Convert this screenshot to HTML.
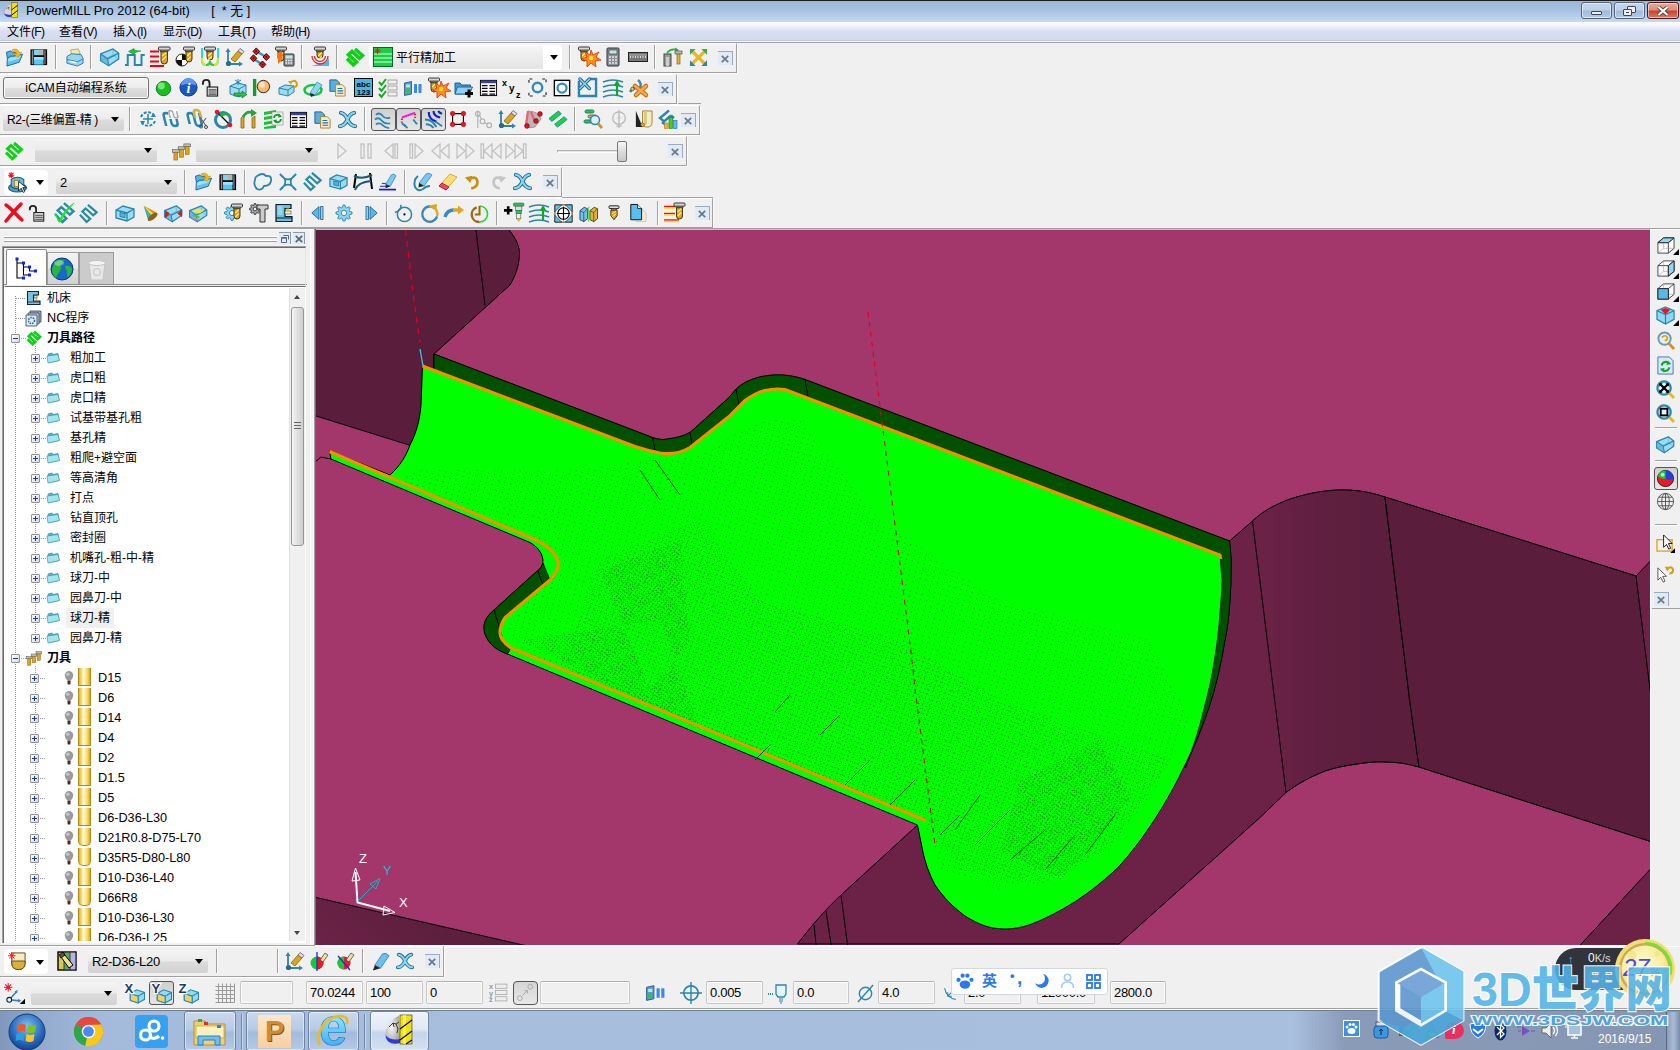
<!DOCTYPE html><html><head><meta charset="utf-8"><title>PowerMILL Pro 2012</title><style>
*{box-sizing:border-box;margin:0;padding:0}
html,body{width:1680px;height:1050px;overflow:hidden;background:#f0f0f0}
body{font-family:"Liberation Sans","Noto Sans CJK SC",sans-serif;font-size:12px;color:#000;position:relative}
#root{position:absolute;left:0;top:0;width:1680px;height:1050px;overflow:hidden;background:#f0f0f0}
.abs{position:absolute}
.title{position:absolute;left:0;top:0;width:1680px;height:22px;background:linear-gradient(#9ab7d9 0,#a6c1e1 40%,#b7cfea 75%,#c6daf1 100%);border-top:1px solid #1c1c1c}
.title .t{position:absolute;left:26px;top:2px;font-size:12.8px;line-height:16px;color:#000;white-space:pre}
.menubar{position:absolute;left:0;top:22px;width:1680px;height:19px;background:linear-gradient(#ffffff 0,#eef1fa 25%,#d9dff1 50%,#d3daee 100%);border-bottom:1px solid #c0c8dc}
.menubar span{position:absolute;top:3px;font-size:12px;line-height:15px;white-space:nowrap}
.menubar span i{font-style:normal;font-size:12px;letter-spacing:-0.7px}
.ln{position:absolute;left:0;width:1680px;height:1px}
.tb{position:absolute;height:30px;border-right:1px solid #a0a0a0;border-bottom:1px solid #a0a0a0;border-top:1px solid #fff;box-shadow:1px 1px 0 #fff}
.sep{position:absolute;width:2px;height:24px;border-left:1px solid #a0a0a0;border-right:1px solid #fff}
.ic{position:absolute;overflow:visible}
.cls{position:absolute;width:15px;height:14px;background:#e1ebf6;border-top:1px solid #9aaac0;border-right:1px solid #9aaac0}
.combo{position:absolute;height:23px;background:linear-gradient(#f4f4f4 0,#ebebeb 48%,#dcdcdc 52%,#d2d2d2 100%);border-radius:2px;font-size:13px;line-height:24px;padding-left:4px;white-space:nowrap;letter-spacing:-0.3px}
.combo:after{content:"";position:absolute;right:5px;top:9px;border:4px solid transparent;border-top:5px solid #000;border-bottom:0}
.fld{position:absolute;height:23px;background:#f0f0f0;border:1px solid #c8c8c8;border-top-color:#aeb2b8;border-radius:2px;font-size:13px;letter-spacing:-0.3px;line-height:22px;padding-left:3px;box-shadow:inset 0 0 0 1px #fafafa}

.wb{position:absolute;top:1px;height:17px;border:1px solid #54637c;border-radius:3px;box-shadow:inset 0 0 0 1px rgba(255,255,255,.55)}
.wb.n{background:linear-gradient(#c3d6ec 0,#bcd0e8 48%,#9fbad8 52%,#b3cbe6 100%)}
.wb.c{background:linear-gradient(#e9a99a 0,#dd8b78 48%,#c4452c 52%,#d77a5e 100%);border-color:#4e1420}
.lp{position:absolute;left:0;top:230px;width:310px;height:714px;background:#f0f0f0}
.tree{position:absolute;left:4px;top:286px;width:302px;height:656px;background:#fff;border:1px solid #fff;border-top-color:#696969;overflow:hidden}
  .tr{position:absolute;height:20px;line-height:21px;font-size:12px;white-space:nowrap}
.tr b{font-weight:bold}
.pm{position:absolute;width:9px;height:9px;border:1px solid #919191;background:linear-gradient(135deg,#fff,#d8d8d8);border-radius:1px}
.pm:before{content:"";position:absolute;left:1px;top:3px;width:5px;height:1px;background:#1a3a8a}
.pm.p:after{content:"";position:absolute;left:3px;top:1px;width:1px;height:5px;background:#1a3a8a}
.dotv{position:absolute;width:1px;background-image:linear-gradient(#999 50%,transparent 50%);background-size:1px 2px}
.doth{position:absolute;height:1px;background-image:linear-gradient(90deg,#999 50%,transparent 50%);background-size:2px 1px}
.tbar{position:absolute;left:0;top:1010px;width:1680px;height:40px;background:linear-gradient(90deg,#8098bc 0,#93abcc 2.5%,#a3badb 6%,#a7bedd 30%,#a8bfdd 77%,#8a9bb8 80%,#8596b2 100%);border-top:1px solid #6d7f98}
.tk{position:absolute;top:0px;height:40px;border:1px solid #6f83a3;border-radius:3px;background:linear-gradient(#c9d9ee 0,#b7cbe6 45%,#a3bbdb 55%,#b4c9e4 100%);box-shadow:inset 0 0 0 1px rgba(255,255,255,.5)}
</style></head><body><div id="root">
<div class="title"><svg class="ic" style="left:3px;top:1px" width="16" height="16" viewBox="0 0 20 20" ><path d="M10,2 C4,4 0.500,11 1.500,15 C3,19 7,19 11,18Z" fill="#d4d6dc" stroke="#889" stroke-width="0.500"/><path d="M1.300,13.500 C2,18.500 7,19.500 11,18 L11,15.500 C7,16.500 3,16 1.300,13.500Z" fill="#3038e0"/><path d="M4,9 l2.500,-2.500 2,1 M6.500,6.500 l1,3" stroke="#333" stroke-width="0.700" fill="none"/><rect x="10.500" y="1" width="8" height="18" fill="#f0e010" stroke="#3a3000" stroke-width="0.500"/><path d="M10.500,10 L18.500,4 M10.500,16.500 L18.500,10.500" stroke="#111" stroke-width="1.200"/></svg><span class="t">PowerMILL Pro 2012 (64-bit)      [  * 无 ]</span><div class="wb n" style="left:1581px;width:31px"><div style="position:absolute;left:9px;top:8px;width:11px;height:4px;background:#eee;border:1px solid #445;border-radius:1px"></div></div><div class="wb n" style="left:1614px;width:31px"><div style="position:absolute;left:12px;top:3px;width:9px;height:7px;background:#eee;border:1px solid #445;border-radius:1px"></div><div style="position:absolute;left:8px;top:6px;width:9px;height:7px;background:#eee;border:2px solid #445;border-width:1px;border-radius:1px;box-shadow:inset 0 0 0 2px #eee, inset 0 0 0 3px #445"></div></div><div class="wb c" style="left:1647px;width:32px"><svg style="position:absolute;left:9px;top:3px" width="12" height="10" viewBox="0 0 12 10"><path d="M1.500,1 L10.500,9 M10.500,1 L1.500,9" stroke="#444" stroke-width="3.800"/><path d="M1.500,1 L10.500,9 M10.500,1 L1.500,9" stroke="#fff" stroke-width="2.200"/></svg></div></div>
<div class="menubar">
<span style="left:7px">文件<i>(F)</i></span>
<span style="left:59px">查看<i>(V)</i></span>
<span style="left:113px">插入<i>(I)</i></span>
<span style="left:163px">显示<i>(D)</i></span>
<span style="left:218px">工具<i>(T)</i></span>
<span style="left:271px">帮助<i>(H)</i></span>
</div>
<div class="ln" style="top:41px;background:#fafafa"></div><div class="ln" style="top:42px;background:#a0a0a0"></div>
<div class="tb" style="left:0;top:43px;width:737px;height:30px"></div><div class="tb" style="left:0;top:74px;width:677px;height:30px"></div><div class="tb" style="left:0;top:105px;width:700px;height:30px"></div><div class="tb" style="left:0;top:136px;width:687px;height:30px"></div><div class="tb" style="left:0;top:167px;width:562px;height:30px"></div><div class="tb" style="left:0;top:198px;width:713px;height:30px"></div><div class="abs" style="left:562px;top:197px;width:151px;height:1px;background:#a0a0a0"></div><div class="abs" style="left:678px;top:103px;width:23px;height:1px;background:#a0a0a0"></div><svg class="ic" style="left:5px;top:48px" width="19" height="19" viewBox="0 0 20 20" ><path d="M1.500,4.500 L6,3 L8,5 L12.500,4.500 L12.500,9 L2.500,11Z" fill="#58b4e0" stroke="#1a5a8a" stroke-width="0.900"/><path d="M2.500,11 Q5,7.500 9,8.500 L18.500,6.500 L15,15 L2,19 Z" fill="#5cc4f0" stroke="#1a5a8a" stroke-width="0.900"/><path d="M3.500,11.500 Q5.500,9 9,9.800 L16.500,8.200 L15.300,11 L3,14.500Z" fill="#b0e8fc" opacity="0.800"/><path d="M7.500,1.800 Q13.500,-0.500 15,4.800 L17.500,4.200 L14,10 L9.500,6.800 L12.300,6 Q11.500,3 8,3.800Z" fill="#f2b818" stroke="#b88408" stroke-width="0.500"/></svg><svg class="ic" style="left:30px;top:48px" width="18" height="18" viewBox="0 0 20 20" ><rect x="0.500" y="1.500" width="18.500" height="17.500" fill="#050505"/><rect x="2" y="2.500" width="1.800" height="15.500" fill="#8a8a8a"/><rect x="15.700" y="2.500" width="1.800" height="15.500" fill="#6a6a6a"/><rect x="4.500" y="2" width="10.500" height="6" fill="#7cd4f0"/><rect x="9.500" y="2" width="5" height="5.500" fill="#b4b4b4"/><rect x="4.500" y="10" width="10.500" height="8.500" fill="#58c8f0"/><rect x="4.500" y="10" width="10.500" height="3" fill="#a0e0f8"/></svg><svg class="ic" style="left:65px;top:48px" width="19" height="19" viewBox="0 0 20 20" ><path d="M6,2 l8,-1 2,5 -9,2z" fill="#f4e8b0" stroke="#b09838" stroke-width="0.8"/><path d="M2,9 l5,-3 10,1 2,4 v5 l-6,3 -11,-3z" fill="#9ad4f0" stroke="#2a80b0"/><path d="M2,12 l11,2.500 6,-3" stroke="#2a80b0" fill="none"/><path d="M5,14 l7,1.500" stroke="#fff" stroke-width="1.500"/></svg><svg class="ic" style="left:100px;top:47px" width="20" height="20" viewBox="0 0 20 20" ><path d="M0.6,6.900 L13,1.900 L18.700,6.200 L18.700,11.900 L8.700,18.700 L0.600,13.700Z" fill="#9adcf2" stroke="#2a86ad" stroke-width="1.300" stroke-linejoin="round"/><path d="M0.600,6.900 L7.500,11.900 L18.700,6.200 M7.500,11.900 L8.700,18.700" fill="none" stroke="#2a86ad" stroke-width="1.300"/><path d="M0.600,6.900 L7.500,11.900 L8.700,18.700 L0.600,13.700Z" fill="#4aa8d0" opacity="0.550"/><path d="M13,1.900 V8 L0.600,13.700 M13,8 L18.700,11.900" fill="none" stroke="#2a86ad" stroke-width="0.500" opacity="0.700"/></svg><svg class="ic" style="left:125px;top:47px" width="20" height="20" viewBox="0 0 20 20" ><path d="M0,18 H2.75 V8 H9.75 V18 H16.5 V8 H19.75" fill="none" stroke="#2a86ad" stroke-width="2"/><path d="M3.5,4.4 L9,1.5 Q8,3.5 16,4 Q9,5 9,7.5Z" fill="#20c030" stroke="#0a8018" stroke-width="0.5"/></svg><svg class="ic" style="left:150px;top:47px" width="20" height="20" viewBox="0 0 20 20" ><path d="M0,4.5 h9 M0,9.5 h9 M0,14.5 h9 M0,19 h14" stroke="#f00010" stroke-width="1.8"/><rect x="8.5" y="0" width="11.5" height="3.2" rx="0.8" fill="#d8d8d8" stroke="#222" stroke-width="0.9"/><rect x="10.5" y="3.2" width="7.5" height="1.6" fill="#aaa" stroke="#333" stroke-width="0.6"/><path d="M11,4.8 V13.75 a3.25,3.25 0 0 0 6.5,0 V4.8Z" fill="#d9a521" stroke="#3a2a00" stroke-width="0.9"/><path d="M12.2,9 l4.1,-3.5 M12.2,13 l4.1,-3.5" stroke="#ffe890" stroke-width="1.1"/></svg><svg class="ic" style="left:175px;top:47px" width="20" height="20" viewBox="0 0 20 20" ><circle cx="7" cy="13" r="6" fill="#fff" stroke="#222"/><path d="M7,7 a6,6 0 0 1 6,6 h-6z M7,19 a6,6 0 0 1 -6,-6 h6z" fill="#111"/><rect x="8.5" y="0" width="11" height="3.2" rx="0.8" fill="#d8d8d8" stroke="#222" stroke-width="0.9"/><rect x="10.5" y="3.2" width="7" height="1.6" fill="#aaa" stroke="#333" stroke-width="0.6"/><path d="M11,4.8 V12.0 a3.0,3.0 0 0 0 6,0 V4.8Z" fill="#d9a521" stroke="#3a2a00" stroke-width="0.9"/><path d="M12.2,9 l3.6,-3.5 M12.2,13 l3.6,-3.5" stroke="#ffe890" stroke-width="1.1"/></svg><svg class="ic" style="left:200px;top:47px" width="20" height="20" viewBox="0 0 20 20" ><path d="M2,1 V13 q0,5 4,5 q4,0 4,-4 q0,4 4,4 q4,0 4,-5 V1" fill="none" stroke="#20d8f0" stroke-width="2"/><path d="M2,11 q0,7 4,7 q4,0 4,-4 q0,4 4,4 q4,0 4,-7" fill="none" stroke="#e8e020" stroke-width="2"/><path d="M6,18 q4,0 4,-4 q0,4 4,4" fill="none" stroke="#20d040" stroke-width="2"/><rect x="4.5" y="0" width="11" height="3.2" rx="0.8" fill="#d8d8d8" stroke="#222" stroke-width="0.9"/><rect x="6.5" y="3.2" width="7" height="1.6" fill="#aaa" stroke="#333" stroke-width="0.6"/><path d="M7,4.8 V10.0 a3.0,3.0 0 0 0 6,0 V4.8Z" fill="#d9a521" stroke="#3a2a00" stroke-width="0.9"/><path d="M8.2,9 l3.6,-3.5 M8.2,13 l3.6,-3.5" stroke="#ffe890" stroke-width="1.1"/></svg><svg class="ic" style="left:225px;top:47px" width="20" height="20" viewBox="0 0 20 20" ><path d="M3,17 V3 M3,17 H16" stroke="#2a86ad" stroke-width="1.8" fill="none"/><path d="M0.5,5 L3,1 L5.5,5Z M14,14.5 L18,17 L14,19.5Z" fill="#2a86ad"/><circle cx="3.5" cy="16.5" r="2.6" fill="#2a6a8a"/><path d="M6,12 L13,4 L17,7 L10,15Z" fill="#d9a521" stroke="#8a6412" stroke-width="0.8"/><path d="M13,4 L15,1.5 L19,4.5 L17,7Z" fill="#ddd" stroke="#555" stroke-width="0.7"/></svg><svg class="ic" style="left:250px;top:47px" width="20" height="20" viewBox="0 0 20 20" ><path d="M6.300,4.400 L16.300,10 M2.500,11.300 L12.500,17.500" stroke="#3a9ab8" stroke-width="2.400"/><g fill="#e81020" stroke="#200" stroke-width="0.900"><path d="M6.300,0.900 l3.300,3.500 -3.300,3.500 -3.300,-3.500z M16.300,6.500 l3.300,3.500 -3.300,3.500 -3.300,-3.500z M3.500,7.800 l3.300,3.500 -3.300,3.500 -3.300,-3.500z M12.500,14 l3.300,3.500 -3.300,3.500 -3.300,-3.500z"/></g><g fill="#300"><circle cx="6.300" cy="4.400" r="0.800"/><circle cx="16.300" cy="10" r="0.800"/><circle cx="3.500" cy="11.300" r="0.800"/><circle cx="12.500" cy="17.500" r="0.800"/></g></svg><svg class="ic" style="left:275px;top:47px" width="20" height="20" viewBox="0 0 20 20" ><rect x="0.5" y="0" width="11" height="3.2" rx="0.8" fill="#d8d8d8" stroke="#222" stroke-width="0.9"/><rect x="2.5" y="3.2" width="7" height="1.6" fill="#aaa" stroke="#333" stroke-width="0.6"/><path d="M3,4.8 V11.0 a3.0,3.0 0 0 0 6,0 V4.8Z" fill="#d9a521" stroke="#3a2a00" stroke-width="0.9"/><path d="M4.2,9 l3.6,-3.5 M4.2,13 l3.6,-3.5" stroke="#ffe890" stroke-width="1.1"/><path d="M3,6 l3,-2 2,4 -2,6 -3,3z" fill="#ff7010"/><rect x="9" y="7" width="10" height="12" rx="1" fill="#8a9098" stroke="#333"/><rect x="10.500" y="8.500" width="7" height="3" fill="#bfe8e0"/><path d="M10.500,13.500 h7 M10.500,16 h7" stroke="#eee" stroke-width="1.400" stroke-dasharray="1.500,1"/></svg><svg class="ic" style="left:310px;top:47px" width="20" height="20" viewBox="0 0 20 20" ><path d="M1,19 h18 v-8 q-4,6 -10,6z" fill="#50b8e8"/><path d="M2,9 a8,8 0 0 0 16,0 M4.500,9 a5.500,5.500 0 0 0 11,0" fill="none" stroke="#f02030" stroke-width="1.300"/><rect x="4.5" y="0" width="11" height="3.2" rx="0.8" fill="#d8d8d8" stroke="#222" stroke-width="0.9"/><rect x="6.5" y="3.2" width="7" height="1.6" fill="#aaa" stroke="#333" stroke-width="0.6"/><path d="M7,4.8 V8.0 a3.0,3.0 0 0 0 6,0 V4.8Z" fill="#d9a521" stroke="#3a2a00" stroke-width="0.9"/><path d="M8.2,9 l3.6,-3.5 M8.2,13 l3.6,-3.5" stroke="#ffe890" stroke-width="1.1"/></svg><svg class="ic" style="left:345px;top:47px" width="20" height="20" viewBox="0 0 20 20" ><path d="M10,2 L17.500,8.500 L14.500,11.300 L7,4.500 L3.500,7.800 L11.500,15 L8.300,17.800 L2,11.500" fill="none" stroke="#10d018" stroke-width="3.600" stroke-linejoin="miter"/></svg><div class="sep" style="left:55px;top:45px"></div><div class="sep" style="left:90px;top:45px"></div><div class="sep" style="left:301px;top:45px"></div><div class="sep" style="left:336px;top:45px"></div><div class="sep" style="left:569px;top:45px"></div><div class="sep" style="left:654px;top:45px"></div><div class="abs" style="left:369px;top:45px;width:193px;height:25px;background:#fff;border-radius:4px"></div><div class="abs" style="left:372px;top:46px;width:171px;height:23px;background:linear-gradient(#f6f6f6,#ececec 50%,#e4e4e4)"></div><svg class="ic" style="left:373px;top:47px" width="20" height="20" viewBox="0 0 20 20" ><rect x="0.500" y="0.500" width="19" height="19" fill="#18d040" stroke="#063"/><path d="M1,7 h18 M1,11 h18 M1,15 h18" stroke="#9ff0b0" stroke-width="1.600"/><path d="M1.500,4 h6 M4.500,1 v6 M2.300,1.800 l4.400,4.400 M6.700,1.800 l-4.400,4.400" stroke="#f01020" stroke-width="1"/></svg><div class="abs" style="left:396px;top:50px;font-size:12px;line-height:16px;white-space:nowrap">平行精加工</div><div class="abs" style="left:550px;top:55px;border:4px solid transparent;border-top:5px solid #000;border-bottom:0"></div><svg class="ic" style="left:578px;top:47px" width="20" height="20" viewBox="0 0 20 20" ><rect x="0.5" y="0" width="11" height="3.2" rx="0.8" fill="#d8d8d8" stroke="#222" stroke-width="0.9"/><rect x="2.5" y="3.2" width="7" height="1.6" fill="#aaa" stroke="#333" stroke-width="0.6"/><path d="M3,4.8 V11.0 a3.0,3.0 0 0 0 6,0 V4.8Z" fill="#d9a521" stroke="#3a2a00" stroke-width="0.9"/><path d="M4.2,9 l3.6,-3.5 M4.2,13 l3.6,-3.5" stroke="#ffe890" stroke-width="1.1"/><path d="M13,3 l2,5 6,-3 -3,5 5,3 -6,1 1,6 -5,-4 -4,4 0,-6 -5,-2 5,-2 -2,-5 5,3z" fill="#ff8c10" stroke="#e03010" stroke-width="0.8"/><circle cx="13" cy="11" r="2.2" fill="#ffe040"/></svg><svg class="ic" style="left:603px;top:47px" width="20" height="20" viewBox="0 0 20 20" ><rect x="4" y="1" width="12" height="18" rx="1" fill="#8a9098" stroke="#333"/><rect x="6" y="3" width="8" height="4" fill="#bfe8e0" stroke="#333" stroke-width="0.6"/><path d="M6,10 h8 M6,13 h8 M6,16 h8" stroke="#e8e8e8" stroke-width="1.6" stroke-dasharray="2,1"/></svg><svg class="ic" style="left:628px;top:47px" width="20" height="20" viewBox="0 0 20 20" ><rect x="0.500" y="5.500" width="19" height="9" fill="#777" stroke="#222"/><path d="M2,10 h16" stroke="#ddd" stroke-width="2" stroke-dasharray="1,1.500"/><path d="M1,8 h18" stroke="#aaa" stroke-width="1"/></svg><svg class="ic" style="left:663px;top:47px" width="20" height="20" viewBox="0 0 20 20" ><rect x="1" y="7" width="7" height="12" fill="#999" stroke="#444"/><rect x="3" y="10" width="3" height="9" fill="#ccc"/><path d="M4,6 q4,-5 10,-3" stroke="#20b040" stroke-width="1.800" fill="none"/><path d="M12,0.500 l4,2.500 -4,2.500z" fill="#20b040"/><rect x="12" y="4" width="7" height="3" fill="#bbb" stroke="#555" stroke-width="0.700"/><rect x="14" y="7" width="3" height="10" fill="#e0b030" stroke="#8a6412" stroke-width="0.700"/></svg><svg class="ic" style="left:689px;top:48px" width="19" height="19" viewBox="0 0 20 20" ><path d="M3,3 L17,17 M17,3 L3,17" stroke="#e8b820" stroke-width="3.500"/><path d="M1,1 h6 l-6,6z M19,1 v6 l-6,-6z" fill="#30b050"/><path d="M1,19 v-6 l6,6z M19,19 h-6 l6,-6z" fill="#2a86ad"/></svg><div class="cls" style="left:718px;top:51px"><svg style="position:absolute;left:3px;top:3px" width="8" height="8" viewBox="0 0 8 8"><path d="M0.800,0.800 L7.200,7.200 M7.200,0.800 L0.800,7.200" stroke="#687888" stroke-width="1.700"/></svg></div><div class="abs" style="left:3px;top:77px;width:146px;height:22px;border:1px solid #707070;border-radius:3px;background:linear-gradient(#f4f4f4 0,#ececec 48%,#dedede 52%,#d2d2d2 100%);box-shadow:inset 0 0 0 1px #fcfcfc;text-align:center;font-size:12px;line-height:21px;white-space:nowrap">iCAM自动编程系统</div><svg class="ic" style="left:155px;top:80px" width="17" height="17" viewBox="0 0 20 20" ><circle cx="10" cy="10" r="8.500" fill="#18c018" stroke="#064"/><circle cx="7.500" cy="7" r="4" fill="#8ff08f" opacity="0.800"/></svg><svg class="ic" style="left:179px;top:78px" width="19" height="19" viewBox="0 0 20 20" ><circle cx="10" cy="10" r="9" fill="#1858c0" stroke="#0a3080"/><path d="M2,8 a8,8 0 0 1 16,0 q-8,-4 -16,0z" fill="#5c98ec"/><text x="10" y="16" font-family="Liberation Serif,serif" font-style="italic" font-weight="bold" font-size="15" fill="#fff" text-anchor="middle">i</text></svg><svg class="ic" style="left:201px;top:78px" width="19" height="19" viewBox="0 0 20 20" ><path d="M9,10 V5.500 q0,-3.500 -3.500,-3.500 q-3.500,0 -3.500,3.500 v1.500" fill="none" stroke="#222" stroke-width="2"/><rect x="6.500" y="9.500" width="11" height="9.500" fill="#e4e4e4" stroke="#222" stroke-width="1.200"/><path d="M8,12.500 h8.500 M8,14.700 h8.500 M8,16.900 h8.500" stroke="#444" stroke-width="1.200"/></svg><svg class="ic" style="left:228px;top:78px" width="20" height="20" viewBox="0 0 20 20" ><path d="M2,8 l7,-3 9,2 v8 l-7,4 -9,-3z" fill="#9adcf2" stroke="#2a86ad"/><path d="M2,8 l9,3 7,-4 M11,11 v8" stroke="#2a86ad" fill="none"/><path d="M6,15 h8 v-2 l5,3.500 -5,3.500 v-2 h-8z" fill="#30c040" stroke="#087018" stroke-width="0.600"/><path d="M10,1 v6 M7,2 l6,4 M13,2 l-6,4" stroke="#2a86ad" stroke-width="1"/></svg><svg class="ic" style="left:252px;top:78px" width="19" height="19" viewBox="0 0 20 20" ><rect x="1" y="1" width="3.500" height="18" fill="#10a020"/><circle cx="12" cy="9" r="6.500" fill="#ffb870" stroke="#222"/><circle cx="10.500" cy="7" r="3" fill="#ffe0c0"/></svg><svg class="ic" style="left:278px;top:78px" width="20" height="20" viewBox="0 0 20 20" ><path d="M1,10 l6,-3 9,1 v6 l-6,4 -9,-2z" fill="#9adcf2" stroke="#2a86ad"/><path d="M1,10 l9,2 6,-4 M10,12 v6" stroke="#2a86ad" fill="none"/><path d="M12,5 q5,-5 7,1 q0,3 -3,3" fill="none" stroke="#d8a010" stroke-width="2"/><path d="M10,3 l4,0 -1,4z" fill="#d8a010"/></svg><svg class="ic" style="left:303px;top:78px" width="20" height="20" viewBox="0 0 20 20" ><ellipse cx="10" cy="12" rx="8.500" ry="5" fill="none" stroke="#10c840" stroke-width="2.500"/><path d="M7,15 L14,4 L19,7 L12,17Z" fill="#8fd4f4" stroke="#3a90c0" stroke-width="0.800"/><path d="M7,15 l1,4 4,-2z" fill="#222"/></svg><svg class="ic" style="left:328px;top:78px" width="19" height="19" viewBox="0 0 20 20" ><path d="M2,2 h7 l3,3 v9 h-10z" fill="#58b0e0" stroke="#1c5e94"/><path d="M8,7 h7 l3,3 v9 h-10z" fill="#f4ecd0" stroke="#b08820"/><path d="M10,11 h5 M10,13.5 h6 M10,16 h6" stroke="#2a70b0" stroke-width="1.2"/></svg><svg class="ic" style="left:354px;top:78px" width="19" height="19" viewBox="0 0 20 20" ><rect x="0.500" y="0.500" width="19" height="19" fill="#4ab4e4" stroke="#000"/><text x="10" y="9" font-family="Liberation Sans,sans-serif" font-weight="bold" font-size="8.500" text-anchor="middle" fill="#000">abc</text><text x="10" y="17.500" font-family="Liberation Sans,sans-serif" font-weight="bold" font-size="8.500" text-anchor="middle" fill="#000">123</text></svg><svg class="ic" style="left:378px;top:78px" width="20" height="20" viewBox="0 0 20 20" ><path d="M1,4 l2.500,3 4.500,-6 M1,10 l2.500,3 4.500,-6 M1,16 l2.500,3 4.500,-6" fill="none" stroke="#18a828" stroke-width="2"/><g fill="#eee" stroke="#888" stroke-width="0.700"><rect x="10" y="2" width="9" height="4"/><rect x="10" y="8" width="9" height="4"/><rect x="10" y="14" width="9" height="4"/></g></svg><svg class="ic" style="left:403px;top:78px" width="20" height="20" viewBox="0 0 20 20" ><path d="M1.500,5 l7,-1.500 v12.500 l-7,1.500z" fill="#5a98d0" stroke="#2a4a90" stroke-width="0.800"/><rect x="3" y="6.500" width="4" height="3" fill="#b0f0c0"/><rect x="3" y="10.500" width="4" height="5" fill="#30c060"/><rect x="11" y="6" width="3" height="9" rx="0.500" fill="#3a88e8"/><rect x="15.500" y="6" width="3" height="9" rx="0.500" fill="#3a88e8"/></svg><svg class="ic" style="left:428px;top:78px" width="20" height="20" viewBox="0 0 20 20" ><rect x="0.5" y="0" width="11" height="3.2" rx="0.8" fill="#d8d8d8" stroke="#222" stroke-width="0.9"/><rect x="2.5" y="3.2" width="7" height="1.6" fill="#aaa" stroke="#333" stroke-width="0.6"/><path d="M3,4.8 V11.0 a3.0,3.0 0 0 0 6,0 V4.8Z" fill="#d9a521" stroke="#3a2a00" stroke-width="0.9"/><path d="M4.2,9 l3.6,-3.5 M4.2,13 l3.6,-3.5" stroke="#ffe890" stroke-width="1.1"/><path d="M13,3 l2,5 6,-3 -3,5 5,3 -6,1 1,6 -5,-4 -4,4 0,-6 -5,-2 5,-2 -2,-5 5,3z" fill="#ff8c10" stroke="#e03010" stroke-width="0.8"/><circle cx="13" cy="11" r="2.2" fill="#ffe040"/></svg><svg class="ic" style="left:454px;top:78px" width="20" height="20" viewBox="0 0 20 20" ><path d="M1,5 h5 l1.500,2 h9 v9 h-15.500z" fill="#3f9bd4" stroke="#1c5e94"/><path d="M3.500,9 h15 l-3,7 h-14.500z" fill="#8ed0f5" stroke="#1c6ea4"/><path d="M11,15.500 h8 M15,11.500 v8" stroke="#000" stroke-width="3"/></svg><svg class="ic" style="left:479px;top:78px" width="19" height="19" viewBox="0 0 20 20" ><rect x="1.5" y="2.5" width="17" height="16" fill="#fff" stroke="#000"/><rect x="2" y="3" width="16" height="2.5" fill="#3040c0"/><path d="M3,8 h6 M11,8 h6 M3,11 h6 M11,11 h6 M3,14 h6 M11,14 h6 M3,17 h6 M11,17 h6" stroke="#000" stroke-width="1.3"/></svg><svg class="ic" style="left:502px;top:78px" width="20" height="20" viewBox="0 0 20 20" ><g font-family="Liberation Sans,sans-serif" font-weight="bold" fill="#000"><text x="0" y="8" font-size="9">x</text><text x="7" y="14" font-size="10">y</text><text x="14" y="20" font-size="9">z</text></g></svg><svg class="ic" style="left:528px;top:78px" width="19" height="19" viewBox="0 0 20 20" ><circle cx="10" cy="10" r="5" fill="none" stroke="#3a8ab8" stroke-width="2.500"/><path d="M1,5 V1 H5 M15,1 H19 V5 M19,15 V19 H15 M5,19 H1 V15" fill="none" stroke="#222" stroke-width="1.200" stroke-dasharray="3,1.500"/></svg><svg class="ic" style="left:553px;top:79px" width="18" height="18" viewBox="0 0 20 20" ><rect x="1.500" y="1.500" width="17" height="17" fill="#fff" stroke="#000" stroke-width="1.500"/><circle cx="10" cy="10" r="5" fill="none" stroke="#3a8ab8" stroke-width="2.500"/></svg><svg class="ic" style="left:578px;top:78px" width="19" height="19" viewBox="0 0 20 20" ><path d="M1,3 V19 H19 V1 H12" fill="none" stroke="#2a86ad" stroke-width="2.500"/><path d="M2,1 L12,11 M12,1 L2,11" stroke="#1d6e92" stroke-width="3.500" stroke-linecap="round"/><path d="M2,1 L12,11 M12,1 L2,11" stroke="#8fd4ee" stroke-width="1.500" stroke-linecap="round"/></svg><svg class="ic" style="left:603px;top:78px" width="20" height="20" viewBox="0 0 20 20" ><path d="M0,4 q10,-4 20,0 M0,9 q10,-4 20,0 M0,14 q10,-4 20,0 M0,19 q10,-4 20,0" fill="none" stroke="#2a86ad" stroke-width="1.600"/><path d="M14,17 V6" stroke="#10a828" stroke-width="2.200"/><path d="M10.500,8 L14,2 L17.500,8Z" fill="#10a828"/></svg><svg class="ic" style="left:628px;top:78px" width="20" height="20" viewBox="0 0 20 20" ><path d="M10,2 q5,4 1,9 M2,14 q4,-6 8,-3" fill="none" stroke="#3a8ab8" stroke-width="2.500"/><path d="M7,8 L18,17 M18,8 L8,17" stroke="#c07010" stroke-width="4.500" stroke-linecap="round"/><path d="M7,8 L18,17 M18,8 L8,17" stroke="#f8a848" stroke-width="2.500" stroke-linecap="round"/><circle cx="4.500" cy="11" r="1.800" fill="#f0d020" stroke="#222" stroke-width="0.600"/></svg><div class="cls" style="left:658px;top:82px"><svg style="position:absolute;left:3px;top:3px" width="8" height="8" viewBox="0 0 8 8"><path d="M0.800,0.800 L7.200,7.200 M7.200,0.800 L0.800,7.200" stroke="#687888" stroke-width="1.700"/></svg></div><div class="combo" style="left:3px;top:108px;width:121px;height:23px;font-size:12px">R2-(三维偏置-精 )</div><div class="sep" style="left:129px;top:107px"></div><svg class="ic" style="left:138px;top:109px" width="20" height="20" viewBox="0 0 20 20" ><path d="M3,8 a7.500,7.500 0 0 1 14,0 M17,12 a7.500,7.500 0 0 1 -14,0" fill="none" stroke="#2a86ad" stroke-width="2" stroke-dasharray="3,1.500"/><path d="M10,5 v10 M5,10 h10" stroke="#2a86ad" stroke-width="1.500"/><path d="M15,4 l3,4 -5,0z M5,16 l-3,-4 5,0z" fill="#2a86ad"/></svg><svg class="ic" style="left:163px;top:109px" width="20" height="20" viewBox="0 0 20 20" ><g transform="translate(-3 0) skewX(14)"><path d="M2,17 V7 q0,-3 3,-3 q3,0 3,3 v7 q0,3 3,3 q3,0 3,-3 V4" fill="none" stroke="#2a86ad" stroke-width="2.500"/></g><rect x="5" y="0" width="10" height="10" fill="#fff" opacity="0.900"/><g transform="translate(-1 0) skewX(14)"><path d="M6,9 V4 q0,-2.500 2,-2.500 q2,0 2,2.500 v3 q0,2 2,2 q2,0 2,-2 V2" fill="none" stroke="#a8a8a8" stroke-width="1.500"/></g></svg><svg class="ic" style="left:188px;top:109px" width="20" height="20" viewBox="0 0 20 20" ><g transform="translate(-3 0) skewX(14)"><path d="M1,15 V7 q0,-3 3,-3 q3,0 3,3 v7 q0,3 3,3 q3,0 3,-3 V4" fill="none" stroke="#2a86ad" stroke-width="2.500"/><path d="M8,9 V4 q0,-3 3,-3 q3,0 3,3 v5" fill="none" stroke="#d0b040" stroke-width="2.500"/></g><path d="M12,8 L18,17 M18,9 L13,16" stroke="#667" stroke-width="1.200"/><circle cx="13" cy="17.500" r="1.500" fill="none" stroke="#445" stroke-width="1"/><circle cx="18" cy="18" r="1.500" fill="none" stroke="#445" stroke-width="1"/></svg><svg class="ic" style="left:213px;top:109px" width="20" height="20" viewBox="0 0 20 20" ><circle cx="10" cy="11" r="7.500" fill="none" stroke="#2a86ad" stroke-width="3"/><path d="M4,3 L17,16" stroke="#000" stroke-width="1.200"/><path d="M8,7 q5,-4 9,0" fill="none" stroke="#20b040" stroke-width="2.500"/><path d="M6,5 l5,-2 -1,5z" fill="#20b040"/><circle cx="4" cy="3" r="2.300" fill="#f01020"/><circle cx="17" cy="16" r="2.300" fill="#f01020"/></svg><svg class="ic" style="left:238px;top:109px" width="20" height="20" viewBox="0 0 20 20" ><path d="M3,19 V9 l3,-3 v13z M14,19 V9 l3,-2 v12z" fill="#d9a521" stroke="#8a6412" stroke-width="0.800"/><path d="M5,8 q4,-7 10,-4" fill="none" stroke="#20a838" stroke-width="2.800"/><path d="M13,0 l6,4 -6,4z" fill="#20a838"/></svg><svg class="ic" style="left:263px;top:109px" width="20" height="20" viewBox="0 0 20 20" ><path d="M1,3 l12,-2 v3 l-12,2z M1,8 l12,-2 v3 l-12,2z M1,13 l12,-2 v3 l-12,2z M1,18 l12,-2 v3 l-12,1z" fill="#18c038"/><rect x="9" y="3" width="11" height="13" fill="#f4f4f4" stroke="#888" stroke-width="0.600"/><path d="M11,9 a3.500,3.500 0 0 1 6.500,-1.500 M18,10 a3.500,3.500 0 0 1 -6.500,1.500" fill="none" stroke="#10a028" stroke-width="1.800"/><path d="M16,5 l3,3 -4,0.500z M13,14 l-3,-3 4,-0.500z" fill="#10a028"/></svg><svg class="ic" style="left:289px;top:110px" width="19" height="19" viewBox="0 0 20 20" ><rect x="1.5" y="2.5" width="17" height="16" fill="#fff" stroke="#000"/><rect x="2" y="3" width="16" height="2.5" fill="#3040c0"/><path d="M3,8 h6 M11,8 h6 M3,11 h6 M11,11 h6 M3,14 h6 M11,14 h6 M3,17 h6 M11,17 h6" stroke="#000" stroke-width="1.3"/></svg><svg class="ic" style="left:313px;top:110px" width="19" height="19" viewBox="0 0 20 20" ><path d="M2,2 h7 l3,3 v9 h-10z" fill="#58b0e0" stroke="#1c5e94"/><path d="M8,7 h7 l3,3 v9 h-10z" fill="#f4ecd0" stroke="#b08820"/><path d="M10,11 h5 M10,13.5 h6 M10,16 h6" stroke="#2a70b0" stroke-width="1.2"/></svg><svg class="ic" style="left:338px;top:110px" width="19" height="19" viewBox="0 0 20 20" ><path d="M3,3 C8,4 9,8 10,10 C11,12 13,17 18,17 M17,3 C12,4 11,8 10,10 C9,12 7,17 2,17" fill="none" stroke="#1d6e92" stroke-width="4.2" stroke-linecap="round"/><path d="M3,3 C8,4 9,8 10,10 C11,12 13,17 18,17 M17,3 C12,4 11,8 10,10 C9,12 7,17 2,17" fill="none" stroke="#8fd4ee" stroke-width="2.2" stroke-linecap="round"/></svg><div class="sep" style="left:364px;top:107px"></div><div class="abs" style="left:371px;top:108px;width:25px;height:23px;border:1px solid #555;border-radius:3px;background:linear-gradient(#cfcfcf,#e6e6e6)"></div><div class="abs" style="left:396px;top:108px;width:25px;height:23px;border:1px solid #555;border-radius:3px;background:linear-gradient(#cfcfcf,#e6e6e6)"></div><div class="abs" style="left:421px;top:108px;width:25px;height:23px;border:1px solid #555;border-radius:3px;background:linear-gradient(#cfcfcf,#e6e6e6)"></div><svg class="ic" style="left:374px;top:110px" width="19" height="19" viewBox="0 0 20 20" ><path d="M2,5 q4,-3 7,1 t8,2 M1,10 q4,-3 7,1 t9,3 M2,15 q4,-2 7,1 t7,3" fill="none" stroke="#2a86ad" stroke-width="1.800"/></svg><svg class="ic" style="left:399px;top:110px" width="19" height="19" viewBox="0 0 20 20" ><path d="M3,8 L17,3" stroke="#f020e0" stroke-width="2.200"/><path d="M3,9 v5 M17,4 v5" stroke="#f01020" stroke-width="2" stroke-dasharray="1.500,1.500"/><path d="M3,14 l6,5 M15,10 l4,5 M5,15 l3,3" stroke="#2a86ad" stroke-width="2"/></svg><svg class="ic" style="left:424px;top:110px" width="19" height="19" viewBox="0 0 20 20" ><path d="M5,2 q0,8 8,10 M10,1 q0,5 7,7 M15,1 q1,2 4,3" fill="none" stroke="#0820e0" stroke-width="2.200"/><path d="M1,10 q8,0 12,8 M2,15 q5,0 8,4 M12,12 l7,5" fill="none" stroke="#2a86ad" stroke-width="2"/></svg><svg class="ic" style="left:449px;top:110px" width="18" height="18" viewBox="0 0 20 20" ><path d="M4,4 H16 V16 H4Z" fill="none" stroke="#000" stroke-width="1.200"/><g fill="#f01020" stroke="#800" stroke-width="0.500"><circle cx="4" cy="4" r="2.600"/><circle cx="16" cy="4" r="2.600"/><circle cx="4" cy="16" r="2.600"/><circle cx="16" cy="16" r="2.600"/></g></svg><svg class="ic" style="left:474px;top:110px" width="19" height="19" viewBox="0 0 20 20" ><g fill="none" stroke="#b0b0b0" stroke-width="1.200"><circle cx="4" cy="4" r="2.500"/><circle cx="9" cy="12" r="2.500"/><circle cx="16" cy="16" r="2.500"/><path d="M4,1 v18 M6,6 l2,4 M11,13 l3,2"/></g></svg><svg class="ic" style="left:498px;top:109px" width="20" height="20" viewBox="0 0 20 20" ><path d="M3,17 V3 M3,17 H16" stroke="#2a86ad" stroke-width="1.8" fill="none"/><path d="M0.5,5 L3,1 L5.5,5Z M14,14.5 L18,17 L14,19.5Z" fill="#2a86ad"/><circle cx="3.5" cy="16.5" r="2.6" fill="#2a6a8a"/><path d="M6,12 L13,4 L17,7 L10,15Z" fill="#d9a521" stroke="#8a6412" stroke-width="0.8"/><path d="M13,4 L15,1.5 L19,4.5 L17,7Z" fill="#ddd" stroke="#555" stroke-width="0.7"/></svg><svg class="ic" style="left:523px;top:109px" width="20" height="20" viewBox="0 0 20 20" ><path d="M2,17 L5,2 q10,0 13,8 L12,18 q-5,2 -10,-1z" fill="#b8b8b8" stroke="#777" stroke-width="0.600"/><path d="M5,2 L3,17 M8,3 L12,13" stroke="#f06070" stroke-width="2.200"/><g fill="#e01020" stroke="#600" stroke-width="0.500"><circle cx="17" cy="5" r="2.400"/><circle cx="13" cy="12" r="2.400"/><circle cx="4" cy="17" r="2.400"/></g></svg><svg class="ic" style="left:548px;top:110px" width="19" height="19" viewBox="0 0 20 20" ><path d="M1,9 L11,1 L14,4 L4,12Z M7,15 L17,7 L20,10 L10,18Z" fill="#10d838" stroke="#2a86ad" stroke-width="1"/></svg><div class="sep" style="left:574px;top:107px"></div><svg class="ic" style="left:583px;top:109px" width="20" height="20" viewBox="0 0 20 20" ><rect x="2" y="1" width="9" height="3" rx="1.500" fill="#30c050" stroke="#186"/><rect x="5" y="6" width="9" height="3" rx="1.500" fill="#d8a860" stroke="#864"/><rect x="1" y="11" width="8" height="3" rx="1.500" fill="#30c050" stroke="#186"/><circle cx="12" cy="11" r="4.500" fill="#d8f0fa" stroke="#3a80b0" stroke-width="1.500"/><path d="M15,14.500 L19,19" stroke="#d09030" stroke-width="2.800"/></svg><svg class="ic" style="left:610px;top:110px" width="18" height="18" viewBox="0 0 20 20" ><g fill="none" stroke="#b8b8b8" stroke-width="1.400"><circle cx="10" cy="9" r="7"/><path d="M10,0 v20 M7,18 h6"/></g><circle cx="10" cy="9" r="2" fill="#ccc"/></svg><svg class="ic" style="left:634px;top:110px" width="19" height="19" viewBox="0 0 20 20" ><path d="M2,1 V18 H9 Z" fill="#222"/><path d="M9,1 H19 V13 q0,5 -5,5 q-5,0 -5,-5z" fill="#f4ecc0" stroke="#8a6412" stroke-width="0.800"/><path d="M12,1 V15" stroke="#d8c880" stroke-width="3"/><path d="M9,13 l2.500,2.500 -2.500,2.500 -2.500,-2.500z" fill="#f0a020" stroke="#222" stroke-width="0.600"/></svg><svg class="ic" style="left:658px;top:109px" width="20" height="20" viewBox="0 0 20 20" ><path d="M11,1.500 L2,9 L6,12.500 L13,6.500" fill="none" stroke="#2a86ad" stroke-width="2.400"/><path d="M4,13 L9,17" fill="none" stroke="#2a86ad" stroke-width="2.400"/><path d="M13,6.500 L16,9" fill="none" stroke="#2a86ad" stroke-width="2.400"/><rect x="6.500" y="14" width="3.500" height="5.500" fill="#f0b820" stroke="#c07010" stroke-width="0.600"/><rect x="11" y="8.500" width="3.500" height="11" fill="#40d020" stroke="#187810" stroke-width="0.600"/><rect x="15.500" y="11.500" width="3.500" height="8" fill="#60b8f8" stroke="#1868c8" stroke-width="0.600"/></svg><div class="cls" style="left:681px;top:113px"><svg style="position:absolute;left:3px;top:3px" width="8" height="8" viewBox="0 0 8 8"><path d="M0.800,0.800 L7.200,7.200 M7.200,0.800 L0.800,7.200" stroke="#687888" stroke-width="1.700"/></svg></div><svg class="ic" style="left:4px;top:141px" width="20" height="20" viewBox="0 0 20 20" ><path d="M10,2 L17.500,8.500 L14.500,11.300 L7,4.500 L3.500,7.800 L11.500,15 L8.300,17.800 L2,11.500" fill="none" stroke="#10d018" stroke-width="3" stroke-linejoin="miter"/></svg><svg class="ic" style="left:172px;top:142px" width="19" height="19" viewBox="0 0 20 20" ><rect x="0.5" y="8" width="7" height="3" fill="#bbb" stroke="#555" stroke-width="0.600"/><rect x="2" y="11" width="4" height="8" fill="#d9a521" stroke="#8a6412" stroke-width="0.600"/><rect x="6.5" y="5" width="7" height="3" fill="#bbb" stroke="#555" stroke-width="0.600"/><rect x="8" y="8" width="4" height="8" fill="#d9a521" stroke="#8a6412" stroke-width="0.600"/><rect x="12.5" y="2" width="7" height="3" fill="#bbb" stroke="#555" stroke-width="0.600"/><rect x="14" y="5" width="4" height="8" fill="#d9a521" stroke="#8a6412" stroke-width="0.600"/></svg><div class="combo" style="left:35px;top:139px;width:122px;height:23px;"></div><div class="combo" style="left:196px;top:139px;width:122px;height:23px;"></div><svg class="ic" style="left:330px;top:140px" width="200" height="22" viewBox="330 140 200 22" fill="#f0f0f0" stroke="#c2c2c2" stroke-width="1.300"><path d="M338,144 L346,151 L338,158Z"/><path d="M361,144 h3 v14 h-3z M368,144 h3 v14 h-3z"/><path d="M393,144 L385,151 L393,158Z M395,144 h2.500 v14 h-2.500z"/><path d="M415,144 L423,151 L415,158Z M410,144 h2.500 v14 h-2.500z"/><path d="M440,144 L432,151 L440,158Z M449,144 L441,151 L449,158Z"/><path d="M457,144 L465,151 L457,158Z M466,144 L474,151 L466,158Z"/><path d="M481,144 h2.500 v14 h-2.500z M492,144 L484,151 L492,158Z M501,144 L493,151 L501,158Z"/><path d="M506,144 L514,151 L506,158Z M515,144 L523,151 L515,158Z M523.500,144 h2.500 v14 h-2.500z"/></svg><div class="abs" style="left:557px;top:150px;width:62px;height:3px;background:#e6e6e6;border:1px solid #b0b0b0;border-bottom-color:#fff"></div><div class="abs" style="left:617px;top:141px;width:10px;height:21px;border:1px solid #777;border-radius:2px;background:linear-gradient(#f8f8f8,#dcdcdc 50%,#c8c8c8)"></div><div class="cls" style="left:668px;top:144px"><svg style="position:absolute;left:3px;top:3px" width="8" height="8" viewBox="0 0 8 8"><path d="M0.800,0.800 L7.200,7.200 M7.200,0.800 L0.800,7.200" stroke="#687888" stroke-width="1.700"/></svg></div><div class="abs" style="left:4px;top:170px;width:44px;height:25px;background:#fff;border-radius:4px"></div><svg class="ic" style="left:7px;top:172px" width="21" height="21" viewBox="0 0 20 20" ><ellipse cx="10" cy="15" rx="8.500" ry="4" fill="#4aa0c8" stroke="#1a5a7a"/><path d="M4,14 V7 q6,-4 12,0 V14 q-6,4 -12,0z" fill="#6ab8dc" stroke="#1a5a7a"/><rect x="7" y="8" width="5" height="6" fill="#f0e4a0" stroke="#8a6412" stroke-width="0.600"/><path d="M1,3 h6 M4,0 v6 M1.800,0.800 l4.400,4.400 M6.200,0.800 l-4.400,4.400" stroke="#f01020" stroke-width="1"/><path d="M11,9 l0,9 2.500,-2.500 2,4 1.500,-0.800 -2,-3.800 3.500,0z" fill="#fff" stroke="#000" stroke-width="0.700"/></svg><div class="abs" style="left:36px;top:180px;border:4px solid transparent;border-top:5px solid #000;border-bottom:0"></div><div class="combo" style="left:56px;top:171px;width:121px;height:23px;">2</div><div class="sep" style="left:184px;top:170px"></div><div class="sep" style="left:244px;top:170px"></div><div class="sep" style="left:404px;top:170px"></div><svg class="ic" style="left:194px;top:172px" width="19" height="19" viewBox="0 0 20 20" ><path d="M1.500,4.500 L6,3 L8,5 L12.500,4.500 L12.500,9 L2.500,11Z" fill="#58b4e0" stroke="#1a5a8a" stroke-width="0.900"/><path d="M2.500,11 Q5,7.500 9,8.500 L18.500,6.500 L15,15 L2,19 Z" fill="#5cc4f0" stroke="#1a5a8a" stroke-width="0.900"/><path d="M3.500,11.500 Q5.500,9 9,9.800 L16.500,8.200 L15.300,11 L3,14.500Z" fill="#b0e8fc" opacity="0.800"/><path d="M7.500,1.800 Q13.500,-0.500 15,4.800 L17.500,4.200 L14,10 L9.500,6.800 L12.300,6 Q11.500,3 8,3.800Z" fill="#f2b818" stroke="#b88408" stroke-width="0.500"/></svg><svg class="ic" style="left:219px;top:173px" width="18" height="18" viewBox="0 0 20 20" ><rect x="0.500" y="1.500" width="18.500" height="17.500" fill="#050505"/><rect x="2" y="2.500" width="1.800" height="15.500" fill="#8a8a8a"/><rect x="15.700" y="2.500" width="1.800" height="15.500" fill="#6a6a6a"/><rect x="4.500" y="2" width="10.500" height="6" fill="#7cd4f0"/><rect x="9.500" y="2" width="5" height="5.500" fill="#b4b4b4"/><rect x="4.500" y="10" width="10.500" height="8.500" fill="#58c8f0"/><rect x="4.500" y="10" width="10.500" height="3" fill="#a0e0f8"/></svg><svg class="ic" style="left:253px;top:172px" width="20" height="20" viewBox="0 0 20 20" ><path d="M4,4 q6,-4 9,0 q6,-1 5,5 q-1,5 -7,5 q-2,5 -7,3 q-4,-4 -2,-9 q0,-3 2,-4z" fill="none" stroke="#2a86ad" stroke-width="1.800"/></svg><svg class="ic" style="left:279px;top:173px" width="18" height="18" viewBox="0 0 20 20" ><path d="M1,1 Q10,13 19,1 Q7,10 19,19 Q10,7 1,19 Q13,10 1,1Z" fill="none" stroke="#2a86ad" stroke-width="1.900" stroke-linejoin="miter"/></svg><svg class="ic" style="left:303px;top:172px" width="19" height="19" viewBox="0 0 20 20" ><path d="M9.4,1 L18.6,8.8 L15,12 L7,4.800 L3.500,8 L11.800,15.600 L8,19 L1,11.400" fill="none" stroke="#2a8ca4" stroke-width="2.3" stroke-linejoin="miter"/></svg><svg class="ic" style="left:329px;top:172px" width="19" height="19" viewBox="0 0 20 20" ><path d="M1,7 L8,3 L19,6 L19,14 L12,18 L1,15Z" fill="#9adcf2" stroke="#2a86ad" stroke-width="1.300"/><path d="M1,7 L12,10 L19,6 M12,10 L12,18" fill="none" stroke="#2a86ad" stroke-width="1.300"/><path d="M5,9.500 l5,1.200 v4 l-5,-1.200z M10,10.700 l4,-2" fill="#5ab0d8" stroke="#2a86ad" stroke-width="1"/></svg><svg class="ic" style="left:353px;top:172px" width="20" height="20" viewBox="0 0 20 20" ><path d="M3,2 L1,16 M17,1 L19,17" stroke="#000" stroke-width="2"/><path d="M1,4 q8,4 18,-1 M2,18 q3,-8 16,-9" fill="none" stroke="#1a5a7a" stroke-width="2"/></svg><svg class="ic" style="left:378px;top:172px" width="19" height="19" viewBox="0 0 20 20" ><path d="M1,18.500 h18" stroke="#1020e0" stroke-width="1.800"/><path d="M2,15 h10 M4,12 h6" stroke="#1020e0" stroke-width="1"/><path d="M8,13 L14,3 q3,-2 5,1 L13,15Z" fill="#7cc8f0" stroke="#3a88b8" stroke-width="0.800"/><path d="M8,13 l0,4 5,-2z" fill="#222"/></svg><svg class="ic" style="left:413px;top:172px" width="20" height="20" viewBox="0 0 20 20" ><path d="M5,4 q-5,4 -3,11 q3,5 8,2 q3,-3 7,-3" fill="none" stroke="#2a86ad" stroke-width="2"/><path d="M6,11 L13,2 q3,-2 6,1 L11,14Z" fill="#7cc8f0" stroke="#3a88b8" stroke-width="0.800"/><path d="M6,11 l-0.500,4.500 5.500,-1.500z" fill="#222"/></svg><svg class="ic" style="left:438px;top:172px" width="20" height="20" viewBox="0 0 20 20" ><path d="M1,14 L12,2 L19,5 L8,18Z" fill="#f8e070" stroke="#c8a020" stroke-width="0.800"/><path d="M1,14 L4,11 L11,15 L8,18Z" fill="#f04070" stroke="#a01030" stroke-width="0.800"/></svg><svg class="ic" style="left:464px;top:173px" width="18" height="18" viewBox="0 0 20 20" ><path d="M5,7 q9,-5 10,3 q0,6 -7,7" fill="none" stroke="#c89010" stroke-width="3"/><path d="M1,5 l8,-2 -2,8z" fill="#c89010"/></svg><svg class="ic" style="left:489px;top:173px" width="18" height="18" viewBox="0 0 20 20" ><path d="M15,7 q-9,-5 -10,3 q0,6 7,7" fill="none" stroke="#c4c4c4" stroke-width="3"/><path d="M19,5 l-8,-2 2,8z" fill="#c4c4c4"/></svg><svg class="ic" style="left:513px;top:172px" width="19" height="19" viewBox="0 0 20 20" ><path d="M3,3 C8,4 9,8 10,10 C11,12 13,17 18,17 M17,3 C12,4 11,8 10,10 C9,12 7,17 2,17" fill="none" stroke="#1d6e92" stroke-width="4.2" stroke-linecap="round"/><path d="M3,3 C8,4 9,8 10,10 C11,12 13,17 18,17 M17,3 C12,4 11,8 10,10 C9,12 7,17 2,17" fill="none" stroke="#8fd4ee" stroke-width="2.2" stroke-linecap="round"/></svg><div class="cls" style="left:543px;top:175px"><svg style="position:absolute;left:3px;top:3px" width="8" height="8" viewBox="0 0 8 8"><path d="M0.800,0.800 L7.200,7.200 M7.200,0.800 L0.800,7.200" stroke="#687888" stroke-width="1.700"/></svg></div><svg class="ic" style="left:4px;top:203px" width="20" height="20" viewBox="0 0 20 20" ><path d="M2,2 C8,6 12,12 18,17 M17,1 C12,6 7,12 2,18" fill="none" stroke="#e81020" stroke-width="3.500" stroke-linecap="round"/></svg><svg class="ic" style="left:28px;top:204px" width="18" height="18" viewBox="0 0 20 20" ><path d="M9,10 V5.500 q0,-3.500 -3.500,-3.500 q-3.500,0 -3.500,3.500 v1.500" fill="none" stroke="#222" stroke-width="2"/><rect x="6.500" y="9.500" width="11" height="9.500" fill="#e4e4e4" stroke="#222" stroke-width="1.200"/><path d="M8,12.500 h8.500 M8,14.700 h8.500 M8,16.900 h8.500" stroke="#444" stroke-width="1.200"/></svg><svg class="ic" style="left:54px;top:202px" width="21" height="21" viewBox="0 0 20 20" ><path d="M9.4,1 L18.6,8.8 L15,12 L7,4.800 L3.500,8 L11.800,15.600 L8,19 L1,11.400" fill="none" stroke="#2a8ca4" stroke-width="2.3" stroke-linejoin="miter"/><path d="M1,11 L5,18 Q9,8 19,1 Q10,10 6,19 L4.500,19 Z" fill="#10f020" stroke="#10f020" stroke-width="0.800"/></svg><svg class="ic" style="left:79px;top:204px" width="19" height="19" viewBox="0 0 20 20" ><path d="M9.4,1 L18.6,8.8 L15,12 L7,4.800 L3.500,8 L11.800,15.600 L8,19 L1,11.400" fill="none" stroke="#2a8ca4" stroke-width="2.3" stroke-linejoin="miter"/></svg><svg class="ic" style="left:115px;top:203px" width="20" height="20" viewBox="0 0 20 20" ><path d="M1,7 L8,3 L19,6 L19,14 L12,18 L1,15Z" fill="#9adcf2" stroke="#2a86ad" stroke-width="1.300"/><path d="M1,7 L12,10 L19,6 M12,10 L12,18" fill="none" stroke="#2a86ad" stroke-width="1.300"/><path d="M5,9.500 l5,1.200 v4 l-5,-1.200z M10,10.700 l4,-2" fill="#5ab0d8" stroke="#2a86ad" stroke-width="1"/></svg><svg class="ic" style="left:141px;top:204px" width="18" height="18" viewBox="0 0 20 20" ><path d="M3,2 L18,10 L8,18Z" fill="#e8d040"/><path d="M3,2 L18,10 L15.500,12Z" fill="#f08020"/><path d="M3,2 L15.500,12 L13,14.500Z" fill="#e8e040"/><path d="M3,2 L13,14.500 L10.500,16.500Z" fill="#40c060"/><path d="M3,2 L10.500,16.500 L8,18Z" fill="#30a0e0"/><ellipse cx="13" cy="14.200" rx="6.500" ry="2.800" transform="rotate(-38 13 14.200)" fill="#8a6412"/></svg><svg class="ic" style="left:164px;top:204px" width="19" height="19" viewBox="0 0 20 20" ><path d="M0.6,6.900 L13,1.900 L18.700,6.200 L18.700,11.900 L8.700,18.700 L0.600,13.700Z" fill="#9adcf2" stroke="#2a86ad" stroke-width="1.300" stroke-linejoin="round"/><path d="M0.600,6.900 L7.500,11.900 L18.700,6.200 M7.500,11.900 L8.700,18.700" fill="none" stroke="#2a86ad" stroke-width="1.300"/><path d="M0.600,6.900 L7.500,11.900 L8.700,18.700 L0.600,13.700Z" fill="#4aa8d0" opacity="0.550"/><path d="M13,1.900 V8 L0.600,13.700 M13,8 L18.700,11.900" fill="none" stroke="#2a86ad" stroke-width="0.500" opacity="0.700"/><path d="M1,7 L1,15 L5,12 L5,9Z M19,6 L19,14 L14,10 Z" fill="#f01020"/></svg><svg class="ic" style="left:189px;top:204px" width="19" height="19" viewBox="0 0 20 20" ><path d="M0.6,6.900 L13,1.900 L18.700,6.200 L18.700,11.900 L8.700,18.700 L0.600,13.700Z" fill="#9adcf2" stroke="#2a86ad" stroke-width="1.300" stroke-linejoin="round"/><path d="M0.600,6.900 L7.500,11.900 L18.700,6.200 M7.500,11.900 L8.700,18.700" fill="none" stroke="#2a86ad" stroke-width="1.300"/><path d="M0.600,6.900 L7.500,11.900 L8.700,18.700 L0.600,13.700Z" fill="#4aa8d0" opacity="0.550"/><path d="M13,1.900 V8 L0.600,13.700 M13,8 L18.700,11.900" fill="none" stroke="#2a86ad" stroke-width="0.500" opacity="0.700"/><path d="M3,8 L9,5 L16,7 L11,10Z" fill="#f0e040"/><path d="M4,11 l7,2 v2 l-7,-2z" fill="#30d050"/><path d="M4,14 l7,2 v1.500 l-7,-2z" fill="#f08090"/></svg><svg class="ic" style="left:224px;top:203px" width="20" height="20" viewBox="0 0 20 20" ><path d="M15.4,9.1 L15.4,10.9 L13.2,11.5 L12.7,12.6 L13.9,14.6 L12.6,15.9 L10.6,14.7 L9.5,15.2 L8.9,17.4 L7.1,17.4 L6.5,15.2 L5.4,14.7 L3.4,15.9 L2.1,14.6 L3.3,12.6 L2.8,11.5 L0.6,10.9 L0.6,9.1 L2.8,8.5 L3.3,7.4 L2.1,5.4 L3.4,4.1 L5.4,5.3 L6.5,4.8 L7.1,2.6 L8.9,2.6 L9.5,4.8 L10.6,5.3 L12.6,4.1 L13.9,5.4 L12.7,7.4 L13.2,8.5Z" fill="#8fd4ee" stroke="#2a86ad" stroke-width="1"/><circle cx="8" cy="10" r="2.6" fill="#f0f0f0" stroke="#2a86ad" stroke-width="1"/><rect x="7.5" y="1" width="11" height="3.2" rx="0.8" fill="#d8d8d8" stroke="#222" stroke-width="0.9"/><rect x="9.5" y="4.2" width="7" height="1.6" fill="#aaa" stroke="#333" stroke-width="0.6"/><path d="M10,5.8 V13.0 a3.0,3.0 0 0 0 6,0 V5.8Z" fill="#d9a521" stroke="#3a2a00" stroke-width="0.9"/><path d="M11.2,10 l3.6,-3.5 M11.2,14 l3.6,-3.5" stroke="#ffe890" stroke-width="1.1"/></svg><svg class="ic" style="left:249px;top:203px" width="20" height="20" viewBox="0 0 20 20" ><path d="M11.5,5.3 L11.5,6.7 L9.8,7.1 L9.5,7.9 L10.3,9.4 L9.4,10.3 L7.9,9.5 L7.1,9.8 L6.7,11.5 L5.3,11.5 L4.9,9.8 L4.1,9.5 L2.6,10.3 L1.7,9.4 L2.5,7.9 L2.2,7.1 L0.5,6.7 L0.5,5.3 L2.2,4.9 L2.5,4.1 L1.7,2.6 L2.6,1.7 L4.1,2.5 L4.9,2.2 L5.3,0.5 L6.7,0.5 L7.1,2.2 L7.9,2.5 L9.4,1.7 L10.3,2.6 L9.5,4.1 L9.8,4.9Z" fill="#aaa" stroke="#444" stroke-width="1"/><circle cx="6" cy="6" r="1.9" fill="#f0f0f0" stroke="#444" stroke-width="1"/><path d="M8,2 H19 V6 H16 V19 H11 V6 H8Z" fill="#ccc" stroke="#333"/></svg><svg class="ic" style="left:274px;top:203px" width="20" height="20" viewBox="0 0 20 20" ><path d="M2,1.500 h15 v4 h-6 v8 h7 v5 h-16z" fill="#6cc0dc" stroke="#0a1a2a" stroke-width="1.200"/><path d="M2,15 h16" stroke="#0a1a2a" stroke-width="1"/><rect x="11" y="8" width="6" height="3" fill="#eee" stroke="#444" stroke-width="0.600"/><rect x="12.500" y="5.500" width="2.500" height="2.500" fill="#e8c030"/><rect x="3.500" y="3" width="5" height="9" fill="#a8e0f0" opacity="0.700"/></svg><svg class="ic" style="left:311px;top:205px" width="16" height="16" viewBox="0 0 20 20" ><path d="M10,2 L1,10 L10,18Z" fill="#58b8e8" stroke="#1a5a8a"/><rect x="12" y="2" width="3" height="16" fill="#8fd4ee" stroke="#1a5a8a"/></svg><svg class="ic" style="left:335px;top:204px" width="18" height="18" viewBox="0 0 20 20" ><path d="M18.9,8.9 L18.9,11.1 L16.2,11.7 L15.6,13.2 L17.1,15.6 L15.6,17.1 L13.2,15.6 L11.7,16.2 L11.1,18.9 L8.9,18.9 L8.3,16.2 L6.8,15.6 L4.4,17.1 L2.9,15.6 L4.4,13.2 L3.8,11.7 L1.1,11.1 L1.1,8.9 L3.8,8.3 L4.4,6.8 L2.9,4.4 L4.4,2.9 L6.8,4.4 L8.3,3.8 L8.9,1.1 L11.1,1.1 L11.7,3.8 L13.2,4.4 L15.6,2.9 L17.1,4.4 L15.6,6.8 L16.2,8.3Z" fill="#8fd4ee" stroke="#2a86ad" stroke-width="1"/><circle cx="10" cy="10" r="3.1" fill="#f0f0f0" stroke="#2a86ad" stroke-width="1"/></svg><svg class="ic" style="left:362px;top:205px" width="16" height="16" viewBox="0 0 20 20" ><path d="M10,2 L19,10 L10,18Z" fill="#58b8e8" stroke="#1a5a8a"/><rect x="5" y="2" width="3" height="16" fill="#8fd4ee" stroke="#1a5a8a"/></svg><svg class="ic" style="left:394px;top:204px" width="19" height="19" viewBox="0 0 20 20" ><circle cx="11" cy="11" r="7.500" fill="none" stroke="#2a86ad" stroke-width="1.600"/><path d="M1,9 q3,-1 5,-3 q2,-3 1,-5" fill="none" stroke="#2a86ad" stroke-width="1.600"/><circle cx="11" cy="11" r="1.200" fill="#000"/></svg><svg class="ic" style="left:420px;top:204px" width="19" height="19" viewBox="0 0 20 20" ><path d="M16,5 a8,8 0 1 0 2,8" fill="none" stroke="#3a8ab8" stroke-width="2.500"/><path d="M10,2.500 a8,8 0 0 1 8,10" fill="none" stroke="#e0a820" stroke-width="2.500"/><path d="M12,1 l6,-1 -1,7z" fill="#e0a820"/></svg><svg class="ic" style="left:444px;top:203px" width="20" height="20" viewBox="0 0 20 20" ><path d="M1,14 q2,-7 9,-7" fill="none" stroke="#3a8ab8" stroke-width="3.500"/><path d="M9,7 h6" stroke="#e0a820" stroke-width="3.500"/><path d="M14,2.500 L20,7 L14,11.500Z" fill="#e0a820"/></svg><svg class="ic" style="left:470px;top:204px" width="19" height="19" viewBox="0 0 20 20" ><path d="M10,2 a8.500,8.500 0 0 1 0,17" fill="none" stroke="#10e030" stroke-width="1.600"/><path d="M10,19 a8,8 0 0 1 -3,-15.500" fill="none" stroke="#a06810" stroke-width="2.500"/><path d="M10,2 V11 H5" fill="none" stroke="#a06810" stroke-width="2.200"/></svg><svg class="ic" style="left:504px;top:202px" width="21" height="21" viewBox="0 0 20 20" ><path d="M0,8 h8 M4,4 v8" stroke="#000" stroke-width="2.500"/><rect x="9" y="1" width="10" height="3" rx="1" fill="#30c050" stroke="#176" stroke-width="0.600"/><rect x="11" y="4" width="6" height="4" fill="#ddd" stroke="#555" stroke-width="0.600"/><rect x="11.500" y="8" width="5" height="3" fill="#30c050" stroke="#176" stroke-width="0.600"/><rect x="12" y="11" width="4" height="5" fill="#eee" stroke="#555" stroke-width="0.600"/><path d="M12,16 l2,3 2,-3z" fill="#e0b020"/></svg><svg class="ic" style="left:529px;top:203px" width="20" height="20" viewBox="0 0 20 20" ><path d="M0,4 q10,-4 20,0 M0,9 q10,-4 20,0 M0,14 q10,-4 20,0 M0,19 q10,-4 20,0" fill="none" stroke="#2a86ad" stroke-width="1.600"/><path d="M14,17 V6" stroke="#10a828" stroke-width="2.200"/><path d="M10.500,8 L14,2 L17.500,8Z" fill="#10a828"/></svg><svg class="ic" style="left:554px;top:204px" width="19" height="19" viewBox="0 0 20 20" ><rect x="1" y="1" width="18" height="18" fill="#fff" stroke="#000" stroke-width="0.800"/><path d="M1,1 h7 l-7,7z M19,1 v7 l-7,-7z M1,19 v-7 l7,7z M19,19 h-7 l7,-7z" fill="#58c4f0" stroke="#000" stroke-width="0.600"/><circle cx="10" cy="10" r="6" fill="#fff" stroke="#000" stroke-width="1.200"/><path d="M10,3 v14 M3,10 h14" stroke="#000" stroke-width="1.200"/></svg><svg class="ic" style="left:579px;top:204px" width="19" height="19" viewBox="0 0 20 20" ><path d="M1,7 l4.500,-3.500 3.500,1.500 v10.500 l-4,3 -4,-2z" fill="#78c0e4" stroke="#123a5a" stroke-width="0.900"/><path d="M1,7 l4,2 4,-4 M5,9 v10" fill="none" stroke="#123a5a" stroke-width="0.700"/><path d="M11.500,7 l4.500,-3.500 3.500,1.500 v10.500 l-4,3 -4,-2z" fill="#dcb440" stroke="#4a3408" stroke-width="0.900"/><path d="M11.500,7 l4,2 4,-4 M15.500,9 v10" fill="none" stroke="#4a3408" stroke-width="0.700"/><path d="M11,3.500 h-1.200 v14.500 h1.200" fill="none" stroke="#30e030" stroke-width="1"/></svg><svg class="ic" style="left:605px;top:204px" width="18" height="18" viewBox="0 0 20 20" ><rect x="4.500" y="2" width="11" height="3" rx="0.800" fill="#ddd" stroke="#111" stroke-width="1"/><rect x="7" y="5" width="6" height="1.800" fill="#aaa" stroke="#222" stroke-width="0.600"/><path d="M6.500,6.800 H13.500 V13 L10,17.500 L6.500,13Z" fill="#d9a521" stroke="#2a1a00" stroke-width="0.900"/><path d="M7.500,11 l5,-3 M8,14 l4.500,-3" stroke="#ffe890" stroke-width="1.100"/></svg><svg class="ic" style="left:629px;top:204px" width="18" height="18" viewBox="0 0 20 20" ><path d="M8,6 h7 l4,4 v9.500 h-11z" fill="#f4ecd4" stroke="#c8c0a0" stroke-width="0.800"/><path d="M2,0.500 h7.500 l4.500,4.500 v12.500 h-12z" fill="#58c0f0" stroke="#000" stroke-width="1"/><path d="M9.500,0.500 v4.500 h4.500" fill="#d0f0fc" stroke="#000" stroke-width="0.800"/></svg><svg class="ic" style="left:664px;top:203px" width="20" height="20" viewBox="0 0 20 20" ><path d="M0,3.500 h11 M0,10.500 h11 M0,17 h15" stroke="#f01020" stroke-width="1.600"/><path d="M0,5 h11 M0,12 h11 M0,18.500 h15" stroke="#f8e020" stroke-width="1.600"/><rect x="10.0" y="0" width="11" height="3.2" rx="0.8" fill="#d8d8d8" stroke="#222" stroke-width="0.9"/><rect x="12.0" y="3.2" width="7" height="1.6" fill="#aaa" stroke="#333" stroke-width="0.6"/><path d="M12.5,4.8 V13.0 a3.0,3.0 0 0 0 6,0 V4.8Z" fill="#d9a521" stroke="#3a2a00" stroke-width="0.9"/><path d="M13.7,9 l3.6,-3.5 M13.7,13 l3.6,-3.5" stroke="#ffe890" stroke-width="1.1"/></svg><div class="sep" style="left:106px;top:201px"></div><div class="sep" style="left:216px;top:201px"></div><div class="sep" style="left:301px;top:201px"></div><div class="sep" style="left:386px;top:201px"></div><div class="sep" style="left:496px;top:201px"></div><div class="sep" style="left:657px;top:201px"></div><div class="cls" style="left:695px;top:206px"><svg style="position:absolute;left:3px;top:3px" width="8" height="8" viewBox="0 0 8 8"><path d="M0.800,0.800 L7.200,7.200 M7.200,0.800 L0.800,7.200" stroke="#687888" stroke-width="1.700"/></svg></div>
<div class="ln" style="top:228px;background:#a0a0a0"></div><div class="ln" style="top:229px;background:#fbfbfb"></div><div class="abs" style="left:310px;top:230px;width:1px;height:715px;background:#fff"></div><div class="abs" style="left:311px;top:230px;width:3px;height:715px;background:#f5f5f5"></div><div class="abs" style="left:314px;top:229px;width:1px;height:717px;background:#a0a0a0"></div><div class="abs" style="left:315px;top:229px;width:1px;height:716px;background:#696969"></div><div class="abs" style="left:316px;top:229px;width:1334px;height:1px;background:#c4c4c4"></div><div class="abs" style="left:1650px;top:230px;width:2px;height:716px;background:#fff"></div><div class="abs" style="left:0px;top:945px;width:315px;height:1px;background:#a0a0a0"></div><div class="abs" style="left:0px;top:946px;width:1652px;height:1px;background:#fff"></div><div class="abs" style="left:316px;top:945px;width:1336px;height:1px;background:#fff"></div><div class="abs" style="left:1652px;top:945px;width:28px;height:1px;background:#a0a0a0"></div><div class="abs" style="left:1652px;top:946px;width:28px;height:1px;background:#fff"></div>
<svg class="vp" style="position:absolute;left:316px;top:230px" width="1334" height="715" viewBox="316 230 1334 715">
<defs>
<linearGradient id="gd2" x1="1262" y1="0" x2="1400" y2="0" gradientUnits="userSpaceOnUse"><stop offset="0" stop-color="#6b2246"/><stop offset="0.45" stop-color="#5f1f40"/><stop offset="1" stop-color="#5b1e3d"/></linearGradient>
<pattern id="dots" width="4" height="4" patternUnits="userSpaceOnUse" patternTransform="rotate(23)"><rect x="0" y="0" width="1" height="1" fill="#003800"/></pattern>
<pattern id="dots2" width="3" height="3" patternUnits="userSpaceOnUse" patternTransform="rotate(40)"><rect x="0" y="0" width="1" height="1" fill="#003000"/></pattern>
<pattern id="dots3" width="6" height="5" patternUnits="userSpaceOnUse" patternTransform="rotate(15)"><rect x="0" y="0" width="1" height="1" fill="#004800"/></pattern>
<linearGradient id="gd3" x1="420" y1="905" x2="350" y2="975" gradientUnits="userSpaceOnUse"><stop offset="0" stop-color="#5c1f3e"/><stop offset="1" stop-color="#6b2347"/></linearGradient>
</defs>
<rect x="316" y="230" width="1334" height="715" fill="#a3366b"/>
<path d="M300,220 L500,220 L509,230 C516,238 520,247 519.5,255 C519,266 515,277 510,285 L434,354 L434,452 L409,445 L300,411 Z" fill="#5a1e3c" stroke="#000" stroke-width="1"/>
<path d="M475,222 L485,305.5" stroke="#000" stroke-width="1" fill="none"/>
<path d="M1229.5,541 L1252.5,521 C1263,511 1275,505 1287.5,500 C1305,494 1320,491 1337.5,490 C1355,489.5 1370,492 1385,497 L1636,576 L1660,551 L1660,844.5 L1419,767 C1411,765 1404,763 1396,762.5 C1388,762 1380,761.5 1372.5,762 C1355,764 1340,766 1325,771 C1310,777 1297,784 1286,792.5 L1260,817.5 L1119,944 L797.5,944 C812,925 826,909 841,895 L917.5,825 L1000,600 Z" fill="#6b2246" stroke="#000" stroke-width="1"/>
<path d="M1252.5,521 C1263,511 1275,505 1287.5,500 C1305,494 1320,491 1337.5,490 C1355,489.5 1370,492 1385,497 L1410,703 L1419,767 C1411,765 1404,763 1396,762.5 C1388,762 1380,761.5 1372.5,762 C1355,764 1340,766 1325,771 C1310,777 1297,784 1286,792.5 L1270,662.5 Z" fill="url(#gd2)" stroke="#000" stroke-width="1"/>
<path d="M1385,497 L1636,576 L1660,770 L1660,844.5 L1419,767 L1410,703 Z" fill="#5a1e3c" stroke="#000" stroke-width="1"/>
<path d="M841,895 L848.8,954 M826,911 L832.5,954 M814,925 L817,954" stroke="#000" stroke-width="1" fill="none"/>
<path d="M300,893.8 L562,954 L300,954 Z" fill="url(#gd3)" stroke="#000" stroke-width="1"/>
<path d="M1660,858.7 L1572,954 L1660,954 Z" fill="#6b2246" stroke="#000" stroke-width="1"/>
<path d="M310,466.5 L321,457 L331,459" stroke="#000" stroke-width="1" fill="none"/>
<path d="M434,354 L652.5,437.5 C658,439.5 663,440 667.5,439 C676,438 684,436 690,432.5 L729,397.5 L736,389 C742,383.5 749,380 757.5,377.5 C766,375.5 774,374.5 782.5,375 C790,375.5 798,377 805,379.5 L1229.5,541 C1231,552 1231.5,564 1231,575 C1231,588 1230,600 1229,612.5 C1228,622 1227,631 1225,640 C1221,664 1216,687 1208.6,708.5 C1202,728 1194,747 1185,765 C1176,784 1166,802 1155,819 C1144,836 1132,852 1119,866.5 C1105,880 1090,892 1074.5,902 C1060,911 1045,919 1030,924.6 C1022,927.5 1013,929 1005,929 C996,929 988,927.5 980,924 C972,920.5 964,916 957.5,910 C949,903 941,894 935,885 C929,874 925,862 922.5,850 L917.5,825 L507.5,654 C502,652 498,650 495,647.5 C488,642 484,635 484,627.5 C484,620.5 488,615 494,610 L541,567.5 C543,564 543.5,561 542.5,557.5 C541,551 536,546 530,542.5 L331,459 L329.5,451 L390,475 C400,466 406,456 410,445 C417,432 420,418 421,405 L422.5,365.5 L434,369 Z" fill="#00ff00" stroke="#000" stroke-width="1"/>
<path d="M420,470 L560,470 L700,455 L760,420 L800,420 L880,520 L1000,600 L1150,640 L1190,720 L1150,800 L1090,860 L1000,890 L940,870 L925,822 L520,650 L505,630 L560,565 L540,540 L400,480 Z" fill="url(#dots3)" opacity="0.55"/>
<path d="M600,560 L700,520 L760,600 L900,640 L1000,700 L1170,760 L1110,850 L1040,885 L960,870 L925,820 L700,725 L560,665 Z" fill="url(#dots)" opacity="0.6"/>
<path d="M600,570 L680,540 L690,640 L650,690 Z M1020,780 L1100,740 L1130,800 L1060,880 L1000,850 Z M520,640 L620,690 L700,730 L660,620 Z" fill="url(#dots2)" opacity="0.6"/>
<path d="M434,354 L652.5,437.5 C658,439.5 663,440 667.5,439 C676,438 684,436 690,432.5 L729,397.5 L736,389 C742,383.5 749,380 757.5,377.5 C766,375.5 774,374.5 782.5,375 C790,375.5 798,377 805,379.5 L1229.5,541 C1231,552 1231.5,564 1231,575 C1231,588 1230,600 1229,612.5 C1228,622 1227,631 1225,640 C1221,664 1216,687 1208.6,708.5 C1202,728 1194,747 1185,768 C1193,748 1199,730 1204,708.5 C1209,690 1212,676 1214,662.5 C1217,645 1219,628 1220,612.5 C1221,600 1222,590 1222,580 L1220,554.5 L785,389 C778,388 771,388.5 765,390 C757,392 751,395.5 745,400 L729,416 L690,447 C680,453 670,454 660,452.5 C652,451 644,449 635,446 L434,370 Z" fill="#005000" stroke="#000" stroke-width="0.8"/>
<path d="M541,567.5 L494,610 C488,615 484,620.5 484,627.5 C484,635 488,642 495,647.5 C498,650 502,652 507.5,654 L511,648 C505,644 500,638 500,632.5 C500,627 502,622 505,617.5 L550,580 L543,563 Z" fill="#005000" stroke="#000" stroke-width="0.8"/>
<path d="M537.5,570 L542.5,584 M494,610 L502,636 M652.5,437.5 L655,450 M690,432.5 L692,445 M736,389 L739,405 M805,379.5 L808,397" stroke="#000" stroke-width="1" fill="none"/>
<path d="M329.5,451.5 L535,539.5 C545,544 553,551 557,558 C560,565 557,573 550,580 L505,617.5 C502,622 500,627 500,632.5 C500,638 505,644 511,648 L926,820.5" fill="none" stroke="#ff8c00" stroke-width="3"/>
<path d="M422.5,366 L635,446.5 C644,449.5 652,451.5 660,453 C670,454.5 680,453.5 690,447.5 L729,416.5 L745,400.5 C751,396 757,392.5 765,390.5 C771,389 778,388.5 785,389.5 L1220,555 L1220.8,559" fill="none" stroke="#ff8c00" stroke-width="3"/>
<g stroke="#003000" stroke-width="1" fill="none" opacity="0.9"><path d="M790,695 L775,712 M770,745 L755,760 M840,715 L820,735 M870,760 L845,785 M915,780 L890,805 M940,835 L960,815 M980,795 L955,830 M1010,810 L975,845 M1045,830 L1010,860 M1075,835 L1045,870 M1115,815 L1085,855 M640,470 L660,500 M655,460 L680,495"/></g>
<path d="M405.5,230 Q412,285 414,300 T420,342.5" stroke="#e00020" stroke-width="1.2" stroke-dasharray="6,5" fill="none"/>
<path d="M420,349 L423,366" stroke="#30d8f0" stroke-width="1.2" fill="none"/>
<path d="M868,312 L890,485 L911,652 L916,696 L935,845" stroke="#e00020" stroke-width="1.1" stroke-dasharray="5,5" fill="none"/>
<g fill="none" stroke="#fff" stroke-width="2"><path d="M355.5,872 L357.5,902.5 L390,911"/></g>
<path d="M352,881 L355.5,868 L360,880 Z M384,906 L395,912.5 L383,915 Z" fill="none" stroke="#fff" stroke-width="1"/>
<path d="M358,901 L378,881" stroke="#20b0c0" stroke-width="1"/><path d="M370,884 L380,878.5 L376,889 Z" fill="none" stroke="#20b0c0" stroke-width="1"/>
<g font-family="Liberation Sans, sans-serif" font-size="13"><text x="359" y="863" fill="#fff">Z</text><text x="383" y="875" fill="#20b8c8">Y</text><text x="399" y="907" fill="#fff">X</text></g>
</svg>
<div class="lp"></div><div class="abs" style="left:4px;top:236px;width:273px;height:2px;border-top:1px solid #fff;border-bottom:1px solid #a0a0a0"></div><div class="abs" style="left:4px;top:240px;width:273px;height:2px;border-top:1px solid #fff;border-bottom:1px solid #a0a0a0"></div><div class="abs" style="left:279px;top:232px;width:12px;height:12px;background:#e1ebf6;border-top:1px solid #8a9bb0;border-right:1px solid #8a9bb0"></div><svg class="ic" style="left:281px;top:235px" width="8" height="8" viewBox="0 0 8 8"><path d="M2.500,0.500 H7.500 V4.500 M0.500,2.500 H5.500 V7.500 H0.500Z" fill="none" stroke="#5a6878" stroke-width="1"/><path d="M0.500,3 H5.500" stroke="#5a6878" stroke-width="1.500"/></svg><div class="abs" style="left:293px;top:232px;width:12px;height:12px;background:#e1ebf6;border-top:1px solid #8a9bb0;border-right:1px solid #8a9bb0"></div><svg class="ic" style="left:295px;top:235px" width="8" height="8" viewBox="0 0 8 8"><path d="M0.800,0.800 L7.200,7.200 M7.200,0.800 L0.800,7.200" stroke="#5a6878" stroke-width="1.800"/></svg><div class="abs" style="left:2px;top:284px;width:305px;height:1px;background:#8a8a8a"></div><div class="abs" style="left:6px;top:249px;width:41px;height:36px;background:#fff;border:1px solid #8a8a8a;border-bottom:0;border-radius:2px 2px 0 0"></div><div class="abs" style="left:47px;top:252px;width:32px;height:32px;background:linear-gradient(#f2f2f2 0,#ebebeb 48%,#dddddd 52%,#d2d2d2 100%);border:1px solid #a0a0a0;border-bottom:0"></div><div class="abs" style="left:79px;top:252px;width:35px;height:32px;background:#cbcbcb;border:1px solid #9a9a9a;border-bottom:0"></div><svg class="ic" style="left:15px;top:257px" width="23" height="23" viewBox="0 0 23 23"><path d="M2,2 V21 H8.500 M2,6 H8.500 V18 H14.500 M8.500,10 H14.500 V14 H20.500" fill="none" stroke="#000" stroke-width="1.100"/><g fill="#1020f0"><rect x="0.500" y="0.500" width="3" height="3"/><rect x="7" y="4.500" width="3" height="3"/><rect x="13" y="8.500" width="3" height="3"/><rect x="19" y="12.500" width="3" height="3"/><rect x="13" y="16.500" width="3" height="3"/><rect x="7" y="19.500" width="3" height="3"/></g></svg><svg class="ic" style="left:50px;top:257px" width="24" height="24" viewBox="0 0 24 24"><circle cx="12" cy="12" r="11" fill="#1868c8" stroke="#0a3a80"/><path d="M5,6 q4,-4 9,-3 q-1,4 -4,5 q2,3 0,6 q-3,3 -4,7 q-4,-3 -4,-9 q1,-3 3,-6z M15,9 q4,-1 7,2 q0,6 -4,9 q-2,-3 -1,-6 q-2,-2 -2,-5z" fill="#28b838"/><ellipse cx="9" cy="6" rx="5" ry="3" fill="#fff" opacity="0.350"/></svg><svg class="ic" style="left:86px;top:258px" width="22" height="24" viewBox="0 0 22 24"><path d="M3,5 h16 l-2,17 h-12z" fill="#e8e8e8" stroke="#c4c4c4"/><ellipse cx="11" cy="5" rx="8.500" ry="2.500" fill="#f4f4f4" stroke="#c4c4c4"/><circle cx="11" cy="14" r="3.500" fill="none" stroke="#d0d0d0" stroke-width="1.500"/></svg><div class="abs" style="left:2px;top:246px;width:304px;height:697px;border-left:1px solid #a0a0a0;border-top:1px solid #a0a0a0"></div><div class="abs" style="left:3px;top:247px;width:303px;height:696px;border-left:1px solid #696969;border-top:1px solid #696969;border-right:1px solid #e3e3e3"></div><div class="tree"></div><div class="abs" style="left:0;top:0;width:306px;height:941px;overflow:hidden"><div class="dotv" style="left:15px;top:296px;height:645px"></div><div class="dotv" style="left:35px;top:346px;height:293px"></div><div class="dotv" style="left:35px;top:666px;height:275px"></div><div class="doth" style="left:16px;top:298px;width:10px"></div><svg class="ic" style="left:26px;top:290px" width="16" height="16" viewBox="0 0 16 16"><path d="M1.500,1.500 h11 v3.500 h-5 v6 h6.500 v3.500 h-12.500z" fill="#7cc4dc" stroke="#0a2a3a" stroke-width="1.100"/><path d="M2,12 h12" stroke="#0a2a3a" stroke-width="0.800"/><rect x="8" y="5.500" width="3" height="2.500" fill="#eee" stroke="#333" stroke-width="0.600"/><circle cx="10.500" cy="9" r="0.900" fill="#f0a020"/></svg><div class="tr" style="left:47px;top:288px;">机床</div><div class="doth" style="left:16px;top:318px;width:10px"></div><svg class="ic" style="left:25px;top:309px" width="18" height="18" viewBox="0 0 18 18"><path d="M5,2 h11 v11 h-11z" fill="#9ab" stroke="#345" stroke-width="0.800"/><path d="M3,4 h11 v11 h-11z" fill="#bcd" stroke="#345" stroke-width="0.800"/><path d="M1,6 h11 v11 h-11z" fill="#dde8f0" stroke="#345" stroke-width="0.800"/><circle cx="6.500" cy="11.500" r="3" fill="none" stroke="#2a6a9a" stroke-width="1.500" stroke-dasharray="1.500,1"/></svg><div class="tr" style="left:47px;top:308px;"><span style="font-size:12.7px">NC</span>程序</div><div class="pm" style="left:11px;top:334px"></div><div class="doth" style="left:21px;top:338px;width:5px"></div><svg class="ic" style="left:26px;top:330px" width="16" height="16" viewBox="0 0 20 20"><path d="M10,2 L17.500,8.500 L14.500,11.300 L7,4.500 L3.500,7.800 L11.500,15 L8.300,17.800 L2,11.500" fill="none" stroke="#10d018" stroke-width="3.400" stroke-linejoin="miter"/></svg><div class="tr" style="left:47px;top:328px;"><b>刀具路径</b></div><div class="pm p" style="left:31px;top:354px"></div><div class="doth" style="left:41px;top:358px;width:5px"></div><svg class="ic" style="left:46px;top:350px" width="15" height="15" viewBox="0 0 15 15"><path d="M2,4 l4,-1 1,1.500 5,-1 1,7 -10,2z" fill="#58b0c4" stroke="#3a90a8" stroke-width="0.700"/><path d="M1,6 l11,-1.500 1.500,6 -11.500,2.500z" fill="#a4e4ec" stroke="#3a98b0" stroke-width="0.700"/></svg><div class="tr" style="left:70px;top:348px;">粗加工</div><div class="pm p" style="left:31px;top:374px"></div><div class="doth" style="left:41px;top:378px;width:5px"></div><svg class="ic" style="left:46px;top:370px" width="15" height="15" viewBox="0 0 15 15"><path d="M2,4 l4,-1 1,1.500 5,-1 1,7 -10,2z" fill="#58b0c4" stroke="#3a90a8" stroke-width="0.700"/><path d="M1,6 l11,-1.500 1.500,6 -11.500,2.500z" fill="#a4e4ec" stroke="#3a98b0" stroke-width="0.700"/></svg><div class="tr" style="left:70px;top:368px;">虎口粗</div><div class="pm p" style="left:31px;top:394px"></div><div class="doth" style="left:41px;top:398px;width:5px"></div><svg class="ic" style="left:46px;top:390px" width="15" height="15" viewBox="0 0 15 15"><path d="M2,4 l4,-1 1,1.500 5,-1 1,7 -10,2z" fill="#58b0c4" stroke="#3a90a8" stroke-width="0.700"/><path d="M1,6 l11,-1.500 1.500,6 -11.500,2.500z" fill="#a4e4ec" stroke="#3a98b0" stroke-width="0.700"/></svg><div class="tr" style="left:70px;top:388px;">虎口精</div><div class="pm p" style="left:31px;top:414px"></div><div class="doth" style="left:41px;top:418px;width:5px"></div><svg class="ic" style="left:46px;top:410px" width="15" height="15" viewBox="0 0 15 15"><path d="M2,4 l4,-1 1,1.500 5,-1 1,7 -10,2z" fill="#58b0c4" stroke="#3a90a8" stroke-width="0.700"/><path d="M1,6 l11,-1.500 1.500,6 -11.500,2.500z" fill="#a4e4ec" stroke="#3a98b0" stroke-width="0.700"/></svg><div class="tr" style="left:70px;top:408px;">试基带基孔粗</div><div class="pm p" style="left:31px;top:434px"></div><div class="doth" style="left:41px;top:438px;width:5px"></div><svg class="ic" style="left:46px;top:430px" width="15" height="15" viewBox="0 0 15 15"><path d="M2,4 l4,-1 1,1.500 5,-1 1,7 -10,2z" fill="#58b0c4" stroke="#3a90a8" stroke-width="0.700"/><path d="M1,6 l11,-1.500 1.500,6 -11.500,2.500z" fill="#a4e4ec" stroke="#3a98b0" stroke-width="0.700"/></svg><div class="tr" style="left:70px;top:428px;">基孔精</div><div class="pm p" style="left:31px;top:454px"></div><div class="doth" style="left:41px;top:458px;width:5px"></div><svg class="ic" style="left:46px;top:450px" width="15" height="15" viewBox="0 0 15 15"><path d="M2,4 l4,-1 1,1.500 5,-1 1,7 -10,2z" fill="#58b0c4" stroke="#3a90a8" stroke-width="0.700"/><path d="M1,6 l11,-1.500 1.500,6 -11.500,2.500z" fill="#a4e4ec" stroke="#3a98b0" stroke-width="0.700"/></svg><div class="tr" style="left:70px;top:448px;">粗爬+避空面</div><div class="pm p" style="left:31px;top:474px"></div><div class="doth" style="left:41px;top:478px;width:5px"></div><svg class="ic" style="left:46px;top:470px" width="15" height="15" viewBox="0 0 15 15"><path d="M2,4 l4,-1 1,1.500 5,-1 1,7 -10,2z" fill="#58b0c4" stroke="#3a90a8" stroke-width="0.700"/><path d="M1,6 l11,-1.500 1.500,6 -11.500,2.500z" fill="#a4e4ec" stroke="#3a98b0" stroke-width="0.700"/></svg><div class="tr" style="left:70px;top:468px;">等高清角</div><div class="pm p" style="left:31px;top:494px"></div><div class="doth" style="left:41px;top:498px;width:5px"></div><svg class="ic" style="left:46px;top:490px" width="15" height="15" viewBox="0 0 15 15"><path d="M2,4 l4,-1 1,1.500 5,-1 1,7 -10,2z" fill="#58b0c4" stroke="#3a90a8" stroke-width="0.700"/><path d="M1,6 l11,-1.500 1.500,6 -11.500,2.500z" fill="#a4e4ec" stroke="#3a98b0" stroke-width="0.700"/></svg><div class="tr" style="left:70px;top:488px;">打点</div><div class="pm p" style="left:31px;top:514px"></div><div class="doth" style="left:41px;top:518px;width:5px"></div><svg class="ic" style="left:46px;top:510px" width="15" height="15" viewBox="0 0 15 15"><path d="M2,4 l4,-1 1,1.500 5,-1 1,7 -10,2z" fill="#58b0c4" stroke="#3a90a8" stroke-width="0.700"/><path d="M1,6 l11,-1.500 1.500,6 -11.500,2.500z" fill="#a4e4ec" stroke="#3a98b0" stroke-width="0.700"/></svg><div class="tr" style="left:70px;top:508px;">钻直顶孔</div><div class="pm p" style="left:31px;top:534px"></div><div class="doth" style="left:41px;top:538px;width:5px"></div><svg class="ic" style="left:46px;top:530px" width="15" height="15" viewBox="0 0 15 15"><path d="M2,4 l4,-1 1,1.500 5,-1 1,7 -10,2z" fill="#58b0c4" stroke="#3a90a8" stroke-width="0.700"/><path d="M1,6 l11,-1.500 1.500,6 -11.500,2.500z" fill="#a4e4ec" stroke="#3a98b0" stroke-width="0.700"/></svg><div class="tr" style="left:70px;top:528px;">密封圈</div><div class="pm p" style="left:31px;top:554px"></div><div class="doth" style="left:41px;top:558px;width:5px"></div><svg class="ic" style="left:46px;top:550px" width="15" height="15" viewBox="0 0 15 15"><path d="M2,4 l4,-1 1,1.500 5,-1 1,7 -10,2z" fill="#58b0c4" stroke="#3a90a8" stroke-width="0.700"/><path d="M1,6 l11,-1.500 1.500,6 -11.500,2.500z" fill="#a4e4ec" stroke="#3a98b0" stroke-width="0.700"/></svg><div class="tr" style="left:70px;top:548px;">机嘴孔-粗-中-精</div><div class="pm p" style="left:31px;top:574px"></div><div class="doth" style="left:41px;top:578px;width:5px"></div><svg class="ic" style="left:46px;top:570px" width="15" height="15" viewBox="0 0 15 15"><path d="M2,4 l4,-1 1,1.500 5,-1 1,7 -10,2z" fill="#58b0c4" stroke="#3a90a8" stroke-width="0.700"/><path d="M1,6 l11,-1.500 1.500,6 -11.500,2.500z" fill="#a4e4ec" stroke="#3a98b0" stroke-width="0.700"/></svg><div class="tr" style="left:70px;top:568px;">球刀-中</div><div class="pm p" style="left:31px;top:594px"></div><div class="doth" style="left:41px;top:598px;width:5px"></div><svg class="ic" style="left:46px;top:590px" width="15" height="15" viewBox="0 0 15 15"><path d="M2,4 l4,-1 1,1.500 5,-1 1,7 -10,2z" fill="#58b0c4" stroke="#3a90a8" stroke-width="0.700"/><path d="M1,6 l11,-1.500 1.500,6 -11.500,2.500z" fill="#a4e4ec" stroke="#3a98b0" stroke-width="0.700"/></svg><div class="tr" style="left:70px;top:588px;">园鼻刀-中</div><div class="pm p" style="left:31px;top:614px"></div><div class="doth" style="left:41px;top:618px;width:5px"></div><svg class="ic" style="left:46px;top:610px" width="15" height="15" viewBox="0 0 15 15"><path d="M2,4 l4,-1 1,1.500 5,-1 1,7 -10,2z" fill="#58b0c4" stroke="#3a90a8" stroke-width="0.700"/><path d="M1,6 l11,-1.500 1.500,6 -11.500,2.500z" fill="#a4e4ec" stroke="#3a98b0" stroke-width="0.700"/></svg><div class="tr" style="left:70px;top:608px;background:#f0f0f0;padding:0 4px;margin-left:-4px;">球刀-精</div><div class="pm p" style="left:31px;top:634px"></div><div class="doth" style="left:41px;top:638px;width:5px"></div><svg class="ic" style="left:46px;top:630px" width="15" height="15" viewBox="0 0 15 15"><path d="M2,4 l4,-1 1,1.500 5,-1 1,7 -10,2z" fill="#58b0c4" stroke="#3a90a8" stroke-width="0.700"/><path d="M1,6 l11,-1.500 1.500,6 -11.500,2.500z" fill="#a4e4ec" stroke="#3a98b0" stroke-width="0.700"/></svg><div class="tr" style="left:70px;top:628px;">园鼻刀-精</div><div class="pm" style="left:11px;top:654px"></div><div class="doth" style="left:21px;top:658px;width:5px"></div><svg class="ic" style="left:25px;top:650px" width="18" height="16" viewBox="0 0 20 20"><rect x="0.5" y="8" width="7" height="3" fill="#bbb" stroke="#555" stroke-width="0.600"/><rect x="2" y="11" width="4" height="8" fill="#d9a521" stroke="#8a6412" stroke-width="0.600"/><rect x="6.5" y="5" width="7" height="3" fill="#bbb" stroke="#555" stroke-width="0.600"/><rect x="8" y="8" width="4" height="8" fill="#d9a521" stroke="#8a6412" stroke-width="0.600"/><rect x="12.5" y="2" width="7" height="3" fill="#bbb" stroke="#555" stroke-width="0.600"/><rect x="14" y="5" width="4" height="8" fill="#d9a521" stroke="#8a6412" stroke-width="0.600"/></svg><div class="tr" style="left:47px;top:648px;"><b>刀具</b></div><div class="pm p" style="left:30px;top:674px"></div><div class="doth" style="left:40px;top:678px;width:6px"></div><svg class="ic" style="left:63px;top:670px" width="12" height="17" viewBox="0 0 12 17"><path d="M6,1 a4.300,4.300 0 0 1 4.300,4.300 q0,2.500 -2.500,5.200 h-3.600 q-2.500,-2.700 -2.500,-5.200 a4.300,4.300 0 0 1 4.300,-4.300z" fill="#9a9a9a"/><circle cx="4.800" cy="4.300" r="1.800" fill="#c4c4c4"/><rect x="4.500" y="10.500" width="3" height="4" rx="0.800" fill="#5a2a1a"/></svg><div class="abs" style="left:78px;top:668px;width:13px;height:18px;border:1px solid #b08a10;border-top:0;border-radius:0 0 0px 0px;background:linear-gradient(90deg,#e4b028 0,#fffad0 40%,#f8e078 70%,#dca828 100%)"></div><div class="tr" style="left:98px;top:668px;"><span style="font-size:12.7px">D15</span></div><div class="pm p" style="left:30px;top:694px"></div><div class="doth" style="left:40px;top:698px;width:6px"></div><svg class="ic" style="left:63px;top:690px" width="12" height="17" viewBox="0 0 12 17"><path d="M6,1 a4.300,4.300 0 0 1 4.300,4.300 q0,2.500 -2.500,5.200 h-3.600 q-2.500,-2.700 -2.500,-5.200 a4.300,4.300 0 0 1 4.300,-4.300z" fill="#9a9a9a"/><circle cx="4.800" cy="4.300" r="1.800" fill="#c4c4c4"/><rect x="4.500" y="10.500" width="3" height="4" rx="0.800" fill="#5a2a1a"/></svg><div class="abs" style="left:78px;top:688px;width:13px;height:18px;border:1px solid #b08a10;border-top:0;border-radius:0 0 0px 0px;background:linear-gradient(90deg,#e4b028 0,#fffad0 40%,#f8e078 70%,#dca828 100%)"></div><div class="tr" style="left:98px;top:688px;"><span style="font-size:12.7px">D6</span></div><div class="pm p" style="left:30px;top:714px"></div><div class="doth" style="left:40px;top:718px;width:6px"></div><svg class="ic" style="left:63px;top:710px" width="12" height="17" viewBox="0 0 12 17"><path d="M6,1 a4.300,4.300 0 0 1 4.300,4.300 q0,2.500 -2.500,5.200 h-3.600 q-2.500,-2.700 -2.500,-5.200 a4.300,4.300 0 0 1 4.300,-4.300z" fill="#9a9a9a"/><circle cx="4.800" cy="4.300" r="1.800" fill="#c4c4c4"/><rect x="4.500" y="10.500" width="3" height="4" rx="0.800" fill="#5a2a1a"/></svg><div class="abs" style="left:78px;top:708px;width:13px;height:18px;border:1px solid #b08a10;border-top:0;border-radius:0 0 0px 0px;background:linear-gradient(90deg,#e4b028 0,#fffad0 40%,#f8e078 70%,#dca828 100%)"></div><div class="tr" style="left:98px;top:708px;"><span style="font-size:12.7px">D14</span></div><div class="pm p" style="left:30px;top:734px"></div><div class="doth" style="left:40px;top:738px;width:6px"></div><svg class="ic" style="left:63px;top:730px" width="12" height="17" viewBox="0 0 12 17"><path d="M6,1 a4.300,4.300 0 0 1 4.300,4.300 q0,2.500 -2.500,5.200 h-3.600 q-2.500,-2.700 -2.500,-5.200 a4.300,4.300 0 0 1 4.300,-4.300z" fill="#9a9a9a"/><circle cx="4.800" cy="4.300" r="1.800" fill="#c4c4c4"/><rect x="4.500" y="10.500" width="3" height="4" rx="0.800" fill="#5a2a1a"/></svg><div class="abs" style="left:78px;top:728px;width:13px;height:18px;border:1px solid #b08a10;border-top:0;border-radius:0 0 0px 0px;background:linear-gradient(90deg,#e4b028 0,#fffad0 40%,#f8e078 70%,#dca828 100%)"></div><div class="tr" style="left:98px;top:728px;"><span style="font-size:12.7px">D4</span></div><div class="pm p" style="left:30px;top:754px"></div><div class="doth" style="left:40px;top:758px;width:6px"></div><svg class="ic" style="left:63px;top:750px" width="12" height="17" viewBox="0 0 12 17"><path d="M6,1 a4.300,4.300 0 0 1 4.300,4.300 q0,2.500 -2.500,5.200 h-3.600 q-2.500,-2.700 -2.500,-5.200 a4.300,4.300 0 0 1 4.300,-4.300z" fill="#9a9a9a"/><circle cx="4.800" cy="4.300" r="1.800" fill="#c4c4c4"/><rect x="4.500" y="10.500" width="3" height="4" rx="0.800" fill="#5a2a1a"/></svg><div class="abs" style="left:78px;top:748px;width:13px;height:18px;border:1px solid #b08a10;border-top:0;border-radius:0 0 0px 0px;background:linear-gradient(90deg,#e4b028 0,#fffad0 40%,#f8e078 70%,#dca828 100%)"></div><div class="tr" style="left:98px;top:748px;"><span style="font-size:12.7px">D2</span></div><div class="pm p" style="left:30px;top:774px"></div><div class="doth" style="left:40px;top:778px;width:6px"></div><svg class="ic" style="left:63px;top:770px" width="12" height="17" viewBox="0 0 12 17"><path d="M6,1 a4.300,4.300 0 0 1 4.300,4.300 q0,2.500 -2.500,5.200 h-3.600 q-2.500,-2.700 -2.500,-5.200 a4.300,4.300 0 0 1 4.300,-4.300z" fill="#9a9a9a"/><circle cx="4.800" cy="4.300" r="1.800" fill="#c4c4c4"/><rect x="4.500" y="10.500" width="3" height="4" rx="0.800" fill="#5a2a1a"/></svg><div class="abs" style="left:78px;top:768px;width:13px;height:18px;border:1px solid #b08a10;border-top:0;border-radius:0 0 0px 0px;background:linear-gradient(90deg,#e4b028 0,#fffad0 40%,#f8e078 70%,#dca828 100%)"></div><div class="tr" style="left:98px;top:768px;"><span style="font-size:12.7px">D1.5</span></div><div class="pm p" style="left:30px;top:794px"></div><div class="doth" style="left:40px;top:798px;width:6px"></div><svg class="ic" style="left:63px;top:790px" width="12" height="17" viewBox="0 0 12 17"><path d="M6,1 a4.300,4.300 0 0 1 4.300,4.300 q0,2.500 -2.500,5.200 h-3.600 q-2.500,-2.700 -2.500,-5.200 a4.300,4.300 0 0 1 4.300,-4.300z" fill="#9a9a9a"/><circle cx="4.800" cy="4.300" r="1.800" fill="#c4c4c4"/><rect x="4.500" y="10.500" width="3" height="4" rx="0.800" fill="#5a2a1a"/></svg><div class="abs" style="left:78px;top:788px;width:13px;height:18px;border:1px solid #b08a10;border-top:0;border-radius:0 0 0px 0px;background:linear-gradient(90deg,#e4b028 0,#fffad0 40%,#f8e078 70%,#dca828 100%)"></div><div class="tr" style="left:98px;top:788px;"><span style="font-size:12.7px">D5</span></div><div class="pm p" style="left:30px;top:814px"></div><div class="doth" style="left:40px;top:818px;width:6px"></div><svg class="ic" style="left:63px;top:810px" width="12" height="17" viewBox="0 0 12 17"><path d="M6,1 a4.300,4.300 0 0 1 4.300,4.300 q0,2.500 -2.500,5.200 h-3.600 q-2.500,-2.700 -2.500,-5.200 a4.300,4.300 0 0 1 4.300,-4.300z" fill="#9a9a9a"/><circle cx="4.800" cy="4.300" r="1.800" fill="#c4c4c4"/><rect x="4.500" y="10.500" width="3" height="4" rx="0.800" fill="#5a2a1a"/></svg><div class="abs" style="left:78px;top:808px;width:13px;height:18px;border:1px solid #b08a10;border-top:0;border-radius:0 0 0px 0px;background:linear-gradient(90deg,#e4b028 0,#fffad0 40%,#f8e078 70%,#dca828 100%)"></div><div class="tr" style="left:98px;top:808px;"><span style="font-size:12.7px">D6-D36-L30</span></div><div class="pm p" style="left:30px;top:834px"></div><div class="doth" style="left:40px;top:838px;width:6px"></div><svg class="ic" style="left:63px;top:830px" width="12" height="17" viewBox="0 0 12 17"><path d="M6,1 a4.300,4.300 0 0 1 4.300,4.300 q0,2.500 -2.500,5.200 h-3.600 q-2.500,-2.700 -2.500,-5.200 a4.300,4.300 0 0 1 4.300,-4.300z" fill="#9a9a9a"/><circle cx="4.800" cy="4.300" r="1.800" fill="#c4c4c4"/><rect x="4.500" y="10.500" width="3" height="4" rx="0.800" fill="#5a2a1a"/></svg><div class="abs" style="left:78px;top:828px;width:13px;height:18px;border:1px solid #b08a10;border-top:0;border-radius:0 0 5px 5px;background:linear-gradient(90deg,#e4b028 0,#fffad0 40%,#f8e078 70%,#dca828 100%)"></div><div class="tr" style="left:98px;top:828px;"><span style="font-size:12.7px">D21R0.8-D75-L70</span></div><div class="pm p" style="left:30px;top:854px"></div><div class="doth" style="left:40px;top:858px;width:6px"></div><svg class="ic" style="left:63px;top:850px" width="12" height="17" viewBox="0 0 12 17"><path d="M6,1 a4.300,4.300 0 0 1 4.300,4.300 q0,2.500 -2.500,5.200 h-3.600 q-2.500,-2.700 -2.500,-5.200 a4.300,4.300 0 0 1 4.300,-4.300z" fill="#9a9a9a"/><circle cx="4.800" cy="4.300" r="1.800" fill="#c4c4c4"/><rect x="4.500" y="10.500" width="3" height="4" rx="0.800" fill="#5a2a1a"/></svg><div class="abs" style="left:78px;top:848px;width:13px;height:18px;border:1px solid #b08a10;border-top:0;border-radius:0 0 5px 5px;background:linear-gradient(90deg,#e4b028 0,#fffad0 40%,#f8e078 70%,#dca828 100%)"></div><div class="tr" style="left:98px;top:848px;"><span style="font-size:12.7px">D35R5-D80-L80</span></div><div class="pm p" style="left:30px;top:874px"></div><div class="doth" style="left:40px;top:878px;width:6px"></div><svg class="ic" style="left:63px;top:870px" width="12" height="17" viewBox="0 0 12 17"><path d="M6,1 a4.300,4.300 0 0 1 4.300,4.300 q0,2.500 -2.500,5.200 h-3.600 q-2.500,-2.700 -2.500,-5.200 a4.300,4.300 0 0 1 4.300,-4.300z" fill="#9a9a9a"/><circle cx="4.800" cy="4.300" r="1.800" fill="#c4c4c4"/><rect x="4.500" y="10.500" width="3" height="4" rx="0.800" fill="#5a2a1a"/></svg><div class="abs" style="left:78px;top:868px;width:13px;height:18px;border:1px solid #b08a10;border-top:0;border-radius:0 0 0px 0px;background:linear-gradient(90deg,#e4b028 0,#fffad0 40%,#f8e078 70%,#dca828 100%)"></div><div class="tr" style="left:98px;top:868px;"><span style="font-size:12.7px">D10-D36-L40</span></div><div class="pm p" style="left:30px;top:894px"></div><div class="doth" style="left:40px;top:898px;width:6px"></div><svg class="ic" style="left:63px;top:890px" width="12" height="17" viewBox="0 0 12 17"><path d="M6,1 a4.300,4.300 0 0 1 4.300,4.300 q0,2.500 -2.500,5.200 h-3.600 q-2.500,-2.700 -2.500,-5.200 a4.300,4.300 0 0 1 4.300,-4.300z" fill="#9a9a9a"/><circle cx="4.800" cy="4.300" r="1.800" fill="#c4c4c4"/><rect x="4.500" y="10.500" width="3" height="4" rx="0.800" fill="#5a2a1a"/></svg><div class="abs" style="left:78px;top:888px;width:13px;height:18px;border:1px solid #b08a10;border-top:0;border-radius:0 0 5px 5px;background:linear-gradient(90deg,#e4b028 0,#fffad0 40%,#f8e078 70%,#dca828 100%)"></div><div class="tr" style="left:98px;top:888px;"><span style="font-size:12.7px">D66R8</span></div><div class="pm p" style="left:30px;top:914px"></div><div class="doth" style="left:40px;top:918px;width:6px"></div><svg class="ic" style="left:63px;top:910px" width="12" height="17" viewBox="0 0 12 17"><path d="M6,1 a4.300,4.300 0 0 1 4.300,4.300 q0,2.500 -2.500,5.200 h-3.600 q-2.500,-2.700 -2.500,-5.200 a4.300,4.300 0 0 1 4.300,-4.300z" fill="#9a9a9a"/><circle cx="4.800" cy="4.300" r="1.800" fill="#c4c4c4"/><rect x="4.500" y="10.500" width="3" height="4" rx="0.800" fill="#5a2a1a"/></svg><div class="abs" style="left:78px;top:908px;width:13px;height:18px;border:1px solid #b08a10;border-top:0;border-radius:0 0 0px 0px;background:linear-gradient(90deg,#e4b028 0,#fffad0 40%,#f8e078 70%,#dca828 100%)"></div><div class="tr" style="left:98px;top:908px;"><span style="font-size:12.7px">D10-D36-L30</span></div><div class="pm p" style="left:30px;top:934px"></div><div class="doth" style="left:40px;top:938px;width:6px"></div><svg class="ic" style="left:63px;top:930px" width="12" height="17" viewBox="0 0 12 17"><path d="M6,1 a4.300,4.300 0 0 1 4.300,4.300 q0,2.500 -2.500,5.200 h-3.600 q-2.500,-2.700 -2.500,-5.200 a4.300,4.300 0 0 1 4.300,-4.300z" fill="#9a9a9a"/><circle cx="4.800" cy="4.300" r="1.800" fill="#c4c4c4"/><rect x="4.500" y="10.500" width="3" height="4" rx="0.800" fill="#5a2a1a"/></svg><div class="abs" style="left:78px;top:928px;width:13px;height:18px;border:1px solid #b08a10;border-top:0;border-radius:0 0 0px 0px;background:linear-gradient(90deg,#e4b028 0,#fffad0 40%,#f8e078 70%,#dca828 100%)"></div><div class="tr" style="left:98px;top:928px;"><span style="font-size:12.7px">D6-D36-L25</span></div></div><div class="abs" style="left:4px;top:942px;width:302px;height:1px;background:#fff"></div><div class="abs" style="left:289px;top:288px;width:16px;height:653px;background:#f0f0f0;border-left:1px solid #e0e0e0"></div><div class="abs" style="left:291px;top:307px;width:13px;height:239px;border:1px solid #979797;border-radius:3px;background:linear-gradient(90deg,#f4f4f4,#e0e0e0 50%,#d0d0d0)"></div><div class="abs" style="left:294px;top:422px;width:7px;height:7px;border-top:1px solid #666;border-bottom:1px solid #666"></div><div class="abs" style="left:294px;top:425px;width:7px;height:1px;background:#666"></div><div class="abs" style="left:294px;top:295px;border:3px solid transparent;border-bottom:4px solid #444;border-top:0"></div><div class="abs" style="left:294px;top:931px;border:3px solid transparent;border-top:4px solid #444;border-bottom:0"></div>
<div class="abs" style="left:1651px;top:230px;width:29px;height:716px;background:#f0f0f0"></div><div class="abs" style="left:1654px;top:467px;width:24px;height:23px;border:1px solid #555;border-radius:3px;background:linear-gradient(#cfcfcf,#e6e6e6)"></div><svg class="ic" style="left:1656px;top:236px" width="19" height="19" viewBox="0 0 20 20" ><path d="M2,7 L8,2 L19,2 L19,13 L13,18 L2,18Z" fill="#fcfcfc" stroke="#333" stroke-width="0.900"/><path d="M2,7 H13 V18 M13,7 L19,2" fill="none" stroke="#333" stroke-width="0.900"/><path d="M8,2 V13 H19 M8,13 L2,18" fill="none" stroke="#888" stroke-width="0.500"/><path d="M2,7 L8,2 L19,2 L13,7Z" fill="#8fd8f4" stroke="#222"/></svg><svg class="ic" style="left:1656px;top:259px" width="19" height="19" viewBox="0 0 20 20" ><path d="M2,7 L8,2 L19,2 L19,13 L13,18 L2,18Z" fill="#fcfcfc" stroke="#333" stroke-width="0.900"/><path d="M2,7 H13 V18 M13,7 L19,2" fill="none" stroke="#333" stroke-width="0.900"/><path d="M8,2 V13 H19 M8,13 L2,18" fill="none" stroke="#888" stroke-width="0.500"/><path d="M13,7 L19,2 V13 L13,18Z" fill="#8fd8f4" stroke="#222"/></svg><svg class="ic" style="left:1656px;top:282px" width="19" height="19" viewBox="0 0 20 20" ><path d="M2,7 L8,2 L19,2 L19,13 L13,18 L2,18Z" fill="#fcfcfc" stroke="#333" stroke-width="0.900"/><path d="M2,7 H13 V18 M13,7 L19,2" fill="none" stroke="#333" stroke-width="0.900"/><path d="M8,2 V13 H19 M8,13 L2,18" fill="none" stroke="#888" stroke-width="0.500"/><rect x="2" y="7" width="11" height="11" fill="#58b8e8" stroke="#222"/></svg><svg class="ic" style="left:1656px;top:306px" width="19" height="19" viewBox="0 0 20 20" ><path d="M10,1 L19,5 V14 L10,19 L1,14 V5Z" fill="#8fd8f4" stroke="#2a86ad" stroke-width="1.300"/><path d="M1,5 L10,9 L19,5 M10,9 V19" fill="none" stroke="#2a86ad" stroke-width="1.300"/><path d="M5,4 L10,9 L15,4 L10,2Z" fill="#f01020"/></svg><svg class="ic" style="left:1656px;top:331px" width="19" height="19" viewBox="0 0 20 20" ><circle cx="9" cy="8" r="6.500" fill="#e4f0f8" stroke="#6a9ab8" stroke-width="2"/><path d="M6,7 q4,-4 6,0 q0,3 -3,3" fill="none" stroke="#d8a010" stroke-width="1.800"/><path d="M13.500,13 L19,19" stroke="#d09030" stroke-width="3"/></svg><svg class="ic" style="left:1656px;top:356px" width="19" height="19" viewBox="0 0 20 20" ><path d="M2,1 h12 l4,4 v14 h-16z" fill="#d8e8fa" stroke="#4a70c0"/><path d="M6,10 a4.500,4.500 0 0 1 8,-2 M14,12 a4.500,4.500 0 0 1 -8,2" fill="none" stroke="#10a828" stroke-width="2.200"/><path d="M12,5 l4,3.500 -5,1z M8,17 l-4,-3.500 5,-1z" fill="#10a828"/></svg><svg class="ic" style="left:1656px;top:380px" width="19" height="19" viewBox="0 0 20 20" ><circle cx="8.500" cy="8.500" r="7" fill="#e4f4fa" stroke="#2a8aa8" stroke-width="2.400"/><path d="M4,4 L13,13 M13,4 L4,13" stroke="#000" stroke-width="2.200"/><path d="M3.500,3.500 h3.500 l-3.500,3.500z M13.500,3.500 v3.500 l-3.500,-3.500z M3.500,13.500 v-3.500 l3.500,3.500z M13.500,13.500 h-3.500 l3.500,-3.500z" fill="#000"/><path d="M14,14 L19,19" stroke="#e8b820" stroke-width="3"/></svg><svg class="ic" style="left:1656px;top:404px" width="19" height="19" viewBox="0 0 20 20" ><circle cx="8.500" cy="8.500" r="7" fill="#e4f4fa" stroke="#2a8aa8" stroke-width="2.400"/><rect x="5" y="5" width="7" height="7" fill="none" stroke="#000" stroke-width="2"/><path d="M14,14 L19,19" stroke="#e8b820" stroke-width="3"/></svg><svg class="ic" style="left:1656px;top:435px" width="19" height="19" viewBox="0 0 20 20" ><path d="M0.6,6.900 L13,1.900 L18.700,6.200 L18.700,11.900 L8.700,18.700 L0.600,13.700Z" fill="#9adcf2" stroke="#2a86ad" stroke-width="1.300" stroke-linejoin="round"/><path d="M0.600,6.900 L7.500,11.900 L18.700,6.200 M7.500,11.900 L8.700,18.700" fill="none" stroke="#2a86ad" stroke-width="1.300"/><path d="M0.600,6.900 L7.500,11.900 L8.700,18.700 L0.600,13.700Z" fill="#4aa8d0" opacity="0.550"/><path d="M13,1.900 V8 L0.600,13.700 M13,8 L18.700,11.900" fill="none" stroke="#2a86ad" stroke-width="0.500" opacity="0.700"/></svg><svg class="ic" style="left:1656px;top:469px" width="19" height="19" viewBox="0 0 20 20" ><circle cx="10" cy="10" r="8.500" fill="#f01828" stroke="#222"/><path d="M10,1.500 a8.500,8.500 0 0 1 8.500,8.500 q-4,3 -8.500,0z" fill="#2040e0"/><path d="M10,1.500 a8.500,8.500 0 0 0 -8,6 q5,4 8,2.500z" fill="#18c838"/><circle cx="7" cy="6" r="2" fill="#fff" opacity="0.700"/></svg><svg class="ic" style="left:1656px;top:492px" width="19" height="19" viewBox="0 0 20 20" ><g fill="none" stroke="#555" stroke-width="1"><circle cx="10" cy="10" r="8.500"/><ellipse cx="10" cy="10" rx="4" ry="8.500"/><path d="M1.500,10 h17 M3,5.500 h14 M3,14.500 h14 M10,1.500 v17"/></g></svg><svg class="ic" style="left:1656px;top:534px" width="19" height="19" viewBox="0 0 20 20" ><rect x="1" y="6" width="16" height="12" fill="none" stroke="#d8a010" stroke-width="1.300"/><path d="M8,1 v13 l3,-3 2.500,5 2,-1 -2.500,-5 h4z" fill="#fff" stroke="#000" stroke-width="0.900"/><path d="M15,20 h5 v-5z" fill="#000"/></svg><svg class="ic" style="left:1656px;top:564px" width="19" height="19" viewBox="0 0 20 20" ><path d="M2,4 v13 l3,-3 2.500,5 2,-1 -2.500,-5 h4z" fill="#fff" stroke="#444" stroke-width="0.900"/><path d="M11,6 q5,-5 7,0 q0,4 -4,4" fill="none" stroke="#d8a010" stroke-width="2.200"/><path d="M9,3 l5,0 -1.500,5z" fill="#d8a010"/></svg><div class="abs" style="left:1673px;top:249px;border:3px solid transparent;border-right-color:#000;border-bottom-color:#000"></div><div class="abs" style="left:1673px;top:273px;border:3px solid transparent;border-right-color:#000;border-bottom-color:#000"></div><div class="abs" style="left:1673px;top:296px;border:3px solid transparent;border-right-color:#000;border-bottom-color:#000"></div><div class="abs" style="left:1673px;top:320px;border:3px solid transparent;border-right-color:#000;border-bottom-color:#000"></div><div class="abs" style="left:1655px;top:427px;width:22px;height:2px;border-top:1px solid #a0a0a0;border-bottom:1px solid #fff"></div><div class="abs" style="left:1655px;top:460px;width:22px;height:2px;border-top:1px solid #a0a0a0;border-bottom:1px solid #fff"></div><div class="abs" style="left:1655px;top:524px;width:22px;height:2px;border-top:1px solid #a0a0a0;border-bottom:1px solid #fff"></div><div class="cls" style="left:1654px;top:592px"><svg style="position:absolute;left:3px;top:3px" width="8" height="8" viewBox="0 0 8 8"><path d="M0.800,0.800 L7.200,7.200 M7.200,0.800 L0.800,7.200" stroke="#687888" stroke-width="1.700"/></svg></div><div class="abs" style="left:1652px;top:608px;width:28px;height:1px;background:#a0a0a0"></div>
<div class="tb" style="left:0;top:946px;width:444px;height:31px;border-top:0"></div><div class="ln" style="top:1008px;background:#a0a0a0"></div><div class="ln" style="top:1009px;background:#fff"></div><div class="abs" style="left:4px;top:949px;width:44px;height:25px;background:#fff;border-radius:4px"></div><svg class="ic" style="left:8px;top:951px" width="19" height="20" viewBox="0 0 20 20" ><path d="M4,1.500 H18 V12 q0,7 -7,7 q-7,0 -7,-7z" fill="#f2ecc8" stroke="#6a4a08" stroke-width="1"/><path d="M4,10 H18 V12 q0,7 -7,7 q-7,0 -7,-7z" fill="#d8b040" stroke="#6a4a08" stroke-width="1"/><path d="M0,4.500 h8 M4,0.500 v8 M1.200,1.700 l5.600,5.600 M6.800,1.700 l-5.600,5.600" stroke="#f01020" stroke-width="1"/></svg><div class="abs" style="left:36px;top:960px;border:4px solid transparent;border-top:5px solid #000;border-bottom:0"></div><svg class="ic" style="left:57px;top:951px" width="20" height="20" viewBox="0 0 20 20" ><rect x="1" y="1" width="18" height="18" fill="#d8c850" stroke="#000" stroke-width="1.400"/><rect x="7" y="1.700" width="6" height="16.600" fill="#58a860"/><rect x="13" y="1.700" width="5.300" height="16.600" fill="#b8b0e8"/><path d="M7,1 v18 M13,1 v18" stroke="#222" stroke-width="0.800"/><path d="M4,6 L7,3 L16,14 L12,17Z" fill="#f0e090" stroke="#000"/><path d="M2,4 L6,1 L8,4 L4,7Z" fill="#555" stroke="#000" stroke-width="0.800"/></svg><div class="combo" style="left:88px;top:950px;width:120px;height:23px;">R2-D36-L20</div><div class="sep" style="left:216px;top:949px"></div><div class="sep" style="left:277px;top:949px"></div><div class="sep" style="left:362px;top:949px"></div><svg class="ic" style="left:285px;top:951px" width="20" height="20" viewBox="0 0 20 20" ><path d="M3,17 V3 M3,17 H16" stroke="#2a86ad" stroke-width="1.8" fill="none"/><path d="M0.5,5 L3,1 L5.5,5Z M14,14.5 L18,17 L14,19.5Z" fill="#2a86ad"/><circle cx="3.5" cy="16.5" r="2.6" fill="#2a6a8a"/><path d="M6,12 L13,4 L17,7 L10,15Z" fill="#d9a521" stroke="#8a6412" stroke-width="0.8"/><path d="M13,4 L15,1.5 L19,4.5 L17,7Z" fill="#ddd" stroke="#555" stroke-width="0.7"/></svg><svg class="ic" style="left:309px;top:951px" width="20" height="20" viewBox="0 0 20 20" ><circle cx="8" cy="12" r="6.500" fill="#18c838"/><path d="M8,5.500 a6.500,6.500 0 0 1 0,13z" fill="#f01828"/><path d="M8,1 v19" stroke="#1030e0" stroke-width="1.300"/><path d="M11,9 L16,2 L19,4 L14,11Z" fill="#f0e0a0" stroke="#333" stroke-width="0.700"/></svg><svg class="ic" style="left:335px;top:951px" width="20" height="20" viewBox="0 0 20 20" ><circle cx="9" cy="12" r="6.500" fill="#f01828"/><path d="M9,5.500 a6.500,6.500 0 0 0 0,13z" fill="#18c838"/><path d="M3,5 l12,14" stroke="#1030e0" stroke-width="1.300"/><path d="M11,9 L16,2 L19,4 L14,11Z" fill="#f0e0a0" stroke="#333" stroke-width="0.700"/></svg><svg class="ic" style="left:371px;top:952px" width="19" height="19" viewBox="0 0 20 20" ><path d="M4,14 L12,2 q4,-2 7,2 L10,17Z" fill="#6cc0f0" stroke="#2a78b0" stroke-width="0.800"/><path d="M4,14 l-2,5.500 8,-2.500z" fill="#222"/></svg><svg class="ic" style="left:396px;top:952px" width="18" height="18" viewBox="0 0 20 20" ><path d="M3,3 C8,4 9,8 10,10 C11,12 13,17 18,17 M17,3 C12,4 11,8 10,10 C9,12 7,17 2,17" fill="none" stroke="#1d6e92" stroke-width="4.2" stroke-linecap="round"/><path d="M3,3 C8,4 9,8 10,10 C11,12 13,17 18,17 M17,3 C12,4 11,8 10,10 C9,12 7,17 2,17" fill="none" stroke="#8fd4ee" stroke-width="2.2" stroke-linecap="round"/></svg><div class="cls" style="left:425px;top:954px"><svg style="position:absolute;left:3px;top:3px" width="8" height="8" viewBox="0 0 8 8"><path d="M0.800,0.800 L7.200,7.200 M7.200,0.800 L0.800,7.200" stroke="#687888" stroke-width="1.700"/></svg></div><svg class="ic" style="left:4px;top:983px" width="21" height="21" viewBox="0 0 20 20" ><path d="M0,4 h8 M4,0 v8 M1.200,1.200 l5.600,5.600 M6.800,1.200 l-5.600,5.600" stroke="#f01020" stroke-width="1"/><path d="M5,16 L12,8 M5,16 L15,17" stroke="#3a80c0" stroke-width="1.500"/><path d="M10,8 l3,-1.500 -0.500,3.500z M13.500,15 l3,2 -3,1.500z" fill="#3a80c0"/><circle cx="5" cy="16" r="2.300" fill="#e8f0fa" stroke="#124" stroke-width="1"/><path d="M15,20 h5 v-5z" fill="#000"/></svg><div class="combo" style="left:31px;top:982px;width:86px;height:23px;"></div><div class="abs" style="left:149px;top:981px;width:25px;height:24px;border:1px solid #555;border-radius:3px;background:linear-gradient(#cfcfcf,#e6e6e6)"></div><svg class="ic" style="left:124px;top:982px" width="21" height="21" viewBox="0 0 20 20" ><path d="M6,11 l6,-3.500 7.500,2.500 v6.500 l-6,3.500 -7.500,-2.500z" fill="#8fdcf4" stroke="#2a86ad" stroke-width="1"/><path d="M6,11 l7.500,2.500 6,-3.500 M13.500,13.500 v6.500" stroke="#2a86ad" fill="none" stroke-width="1"/><path d="M6,11 l7.500,2.500 v6.500 l-7.500,-2.500z" fill="#f4d060" stroke="#2a86ad" stroke-width="1"/><text x="0.500" y="10.500" font-family="Liberation Sans,sans-serif" font-weight="bold" font-size="12.500" fill="#1a3a6a" stroke="#fff" stroke-width="2.200" paint-order="stroke">X</text></svg><svg class="ic" style="left:151px;top:982px" width="21" height="21" viewBox="0 0 20 20" ><path d="M6,11 l6,-3.500 7.500,2.500 v6.500 l-6,3.500 -7.500,-2.500z" fill="#8fdcf4" stroke="#2a86ad" stroke-width="1"/><path d="M6,11 l7.500,2.500 6,-3.500 M13.500,13.500 v6.500" stroke="#2a86ad" fill="none" stroke-width="1"/><path d="M6,11 l7.500,2.500 v6.500 l-7.500,-2.500z" fill="#f4d060" stroke="#2a86ad" stroke-width="1"/><text x="0.500" y="10.500" font-family="Liberation Sans,sans-serif" font-weight="bold" font-size="12.500" fill="#1a3a6a" stroke="#fff" stroke-width="2.200" paint-order="stroke">Y</text></svg><svg class="ic" style="left:178px;top:982px" width="21" height="21" viewBox="0 0 20 20" ><path d="M6,11 l6,-3.500 7.500,2.500 v6.500 l-6,3.500 -7.500,-2.500z" fill="#8fdcf4" stroke="#2a86ad" stroke-width="1"/><path d="M6,11 l7.500,2.500 6,-3.500 M13.500,13.500 v6.500" stroke="#2a86ad" fill="none" stroke-width="1"/><path d="M6,11 l7.500,2.500 v6.500 l-7.500,-2.500z" fill="#f4d060" stroke="#2a86ad" stroke-width="1"/><text x="0.500" y="10.500" font-family="Liberation Sans,sans-serif" font-weight="bold" font-size="12.500" fill="#1a3a6a" stroke="#fff" stroke-width="2.200" paint-order="stroke">Z</text></svg><svg class="ic" style="left:215px;top:983px" width="20" height="20" viewBox="0 0 20 20" ><path d="M0.500,3.500 h19 M0.500,7.500 h19 M0.500,11.500 h19 M0.500,15.500 h19 M0.500,19.500 h19 M3.500,0.500 v19 M7.500,0.500 v19 M11.500,0.500 v19 M15.500,0.500 v19 M19.500,0.500 v19" stroke="#9a9a9a" stroke-width="1"/></svg><svg class="ic" style="left:488px;top:982px" width="21" height="21" viewBox="0 0 20 20" ><g font-family="Liberation Sans,sans-serif" font-weight="bold" font-size="7" fill="#999"><text x="1" y="7">x</text><text x="1" y="13">y</text><text x="1" y="19">z</text></g><g fill="#eee" stroke="#aaa" stroke-width="0.800"><rect x="7" y="2" width="11" height="4"/><rect x="7" y="8" width="11" height="4"/><rect x="7" y="14" width="11" height="4"/></g></svg><svg class="ic" style="left:516px;top:984px" width="19" height="19" viewBox="0 0 20 20" ><g fill="none" stroke="#aaa" stroke-width="1"><circle cx="15" cy="4" r="2.500"/><circle cx="4" cy="16" r="2.500"/><path d="M7,13 L12,8 M9,8 h3 v3"/></g></svg><svg class="ic" style="left:645px;top:982px" width="21" height="21" viewBox="0 0 20 20" ><path d="M1.500,5 l7,-1.500 v12.500 l-7,1.500z" fill="#5a98d0" stroke="#2a4a90" stroke-width="0.800"/><rect x="3" y="6.500" width="4" height="3" fill="#b0f0c0"/><rect x="3" y="10.500" width="4" height="5" fill="#30c060"/><rect x="11" y="6" width="3" height="9" rx="0.500" fill="#3a88e8"/><rect x="15.500" y="6" width="3" height="9" rx="0.500" fill="#3a88e8"/></svg><svg class="ic" style="left:680px;top:982px" width="22" height="22" viewBox="0 0 20 20" ><circle cx="10" cy="10" r="6.500" fill="none" stroke="#2a86ad" stroke-width="1.500"/><path d="M10,0 v20 M0,10 h20" stroke="#2a86ad" stroke-width="1.300"/></svg><svg class="ic" style="left:768px;top:983px" width="20" height="20" viewBox="0 0 20 20" ><path d="M0,11 h6" stroke="#2a86ad" stroke-width="2" stroke-dasharray="1,1"/><path d="M8,2 h10 v9 l-2,3 h-6 l-2,-3z" fill="#e4f4fa" stroke="#2a86ad" stroke-width="1.300"/><path d="M11,16 h4 M11,18 h4 M12,20 h2" stroke="#2a86ad" stroke-width="1"/></svg><svg class="ic" style="left:856px;top:984px" width="19" height="19" viewBox="0 0 20 20" ><circle cx="10" cy="10" r="6.500" fill="none" stroke="#2a86ad" stroke-width="1.500"/><path d="M2,19 L18,1" stroke="#2a86ad" stroke-width="1.500"/></svg><svg class="ic" style="left:943px;top:985px" width="16" height="16" viewBox="0 0 20 20" ><path d="M2,4 q2,12 14,14" fill="none" stroke="#2a86ad" stroke-width="1.300"/><path d="M14,6 L6,14 M6,9 v5 h5" fill="none" stroke="#2a86ad" stroke-width="1.300"/></svg><div class="abs" style="left:513px;top:981px;width:25px;height:24px;border:1px solid #555;border-radius:4px;background:linear-gradient(#d4d4d4,#e8e8e8)"></div><svg class="ic" style="left:516px;top:983px" width="19" height="19" viewBox="0 0 20 20" ><g fill="none" stroke="#aaa" stroke-width="1"><circle cx="15" cy="4" r="2.500"/><circle cx="4" cy="16" r="2.500"/><path d="M7,13 L12,8 M9,8 h3 v3"/></g></svg><div class="fld" style="left:240px;top:981px;width:53px"></div><div class="fld" style="left:306px;top:981px;width:57px">70.0244</div><div class="fld" style="left:366px;top:981px;width:57px">100</div><div class="fld" style="left:426px;top:981px;width:57px">0</div><div class="fld" style="left:540px;top:981px;width:90px"></div><div class="fld" style="left:706px;top:981px;width:57px">0.005</div><div class="fld" style="left:793px;top:981px;width:56px">0.0</div><div class="fld" style="left:878px;top:981px;width:57px">4.0</div><div class="fld" style="left:964px;top:981px;width:57px">2.0</div><div class="fld" style="left:1037px;top:981px;width:58px">12000.0</div><div class="fld" style="left:1110px;top:981px;width:56px">2800.0</div>
<div class="tbar"><div class="tk" style="left:184px;width:52px;"></div><div class="tk" style="left:246px;width:59px;"></div><div class="tk" style="left:308px;width:51px;"></div><div class="tk" style="left:370px;width:59px;background:linear-gradient(#eef3fa 0,#dfe8f4 45%,#c4d5ea 55%,#d4e0f0 100%);"></div><div class="abs" style="left:241px;top:3px;width:2px;height:35px;border-left:1px solid #7286a6;border-right:1px solid #c8d8ee"></div><div class="abs" style="left:364px;top:3px;width:2px;height:35px;border-left:1px solid #7286a6;border-right:1px solid #c8d8ee"></div><svg class="ic" style="left:7px;top:1px" width="40" height="40" viewBox="0 0 40 40"><defs><radialGradient id="orb" cx="0.5" cy="0.350" r="0.700"><stop offset="0" stop-color="#7fc4f4"/><stop offset="0.600" stop-color="#2a6cc0"/><stop offset="1" stop-color="#123a80"/></radialGradient></defs><circle cx="20" cy="20" r="18" fill="url(#orb)" stroke="#1a3a6a"/><path d="M11,13 q4,-2 8,0 l-1,7 q-4,-2 -8,0z" fill="#f05a28"/><path d="M21,13 q4,2 8,0 l-1,7 q-4,2 -8,0z" fill="#7fc41c"/><path d="M9.500,22 q4,-2 8,0 l-1,7 q-4,-2 -8,0z" fill="#28a0e8"/><path d="M19.500,22 q4,2 8,0 l-1,7 q-4,2 -8,0z" fill="#fcc420"/></svg><svg class="ic" style="left:73px;top:5px" width="31" height="31" viewBox="0 0 32 32"><circle cx="16" cy="16" r="15" fill="#e8483c"/><path d="M16,16 L3,8.500 A15,15 0 0 0 12.500,30.600 L19,19Z" fill="#2ca84c"/><path d="M16,16 L12.500,30.600 A15,15 0 0 0 29,8.500 L16,9Z" fill="#f8c81c"/><path d="M3,8.500 A15,15 0 0 1 29,8.500 L16,9Z" fill="#e8483c"/><circle cx="16" cy="16" r="7" fill="#fff"/><circle cx="16" cy="16" r="5.500" fill="#4a8af4"/></svg><svg class="ic" style="left:135px;top:4px" width="33" height="33" viewBox="0 0 33 33"><rect width="33" height="33" rx="4" fill="#38a0f0"/><g fill="none" stroke="#fff" stroke-width="3.200"><circle cx="10.500" cy="20" r="5"/><circle cx="19" cy="11" r="5"/><path d="M15,22 q5,3 9,-1"/></g><circle cx="27.500" cy="23" r="1.800" fill="#fff"/></svg><svg class="ic" style="left:193px;top:6px" width="34" height="30" viewBox="0 0 34 30"><path d="M1,4 h11 l2,3 h18 v21 h-31z" fill="#f0d070" stroke="#b89030"/><rect x="3" y="9" width="28" height="12" fill="#faf0c0" stroke="#c8a840" stroke-width="0.800"/><rect x="5" y="2" width="4" height="3" fill="#30b040"/><rect x="11" y="5" width="4" height="3" fill="#e03020"/><rect x="24" y="8" width="4" height="3" fill="#3080e0"/><path d="M5,19 h22 v9 h-5 v-5 h-12 v5 h-5z" fill="#6cc0f0" stroke="#2a80c0"/></svg><div class="abs" style="left:258px;top:4px;width:33px;height:33px;background:linear-gradient(#fde8cc,#f8cfa0)"></div><div class="abs" style="left:265px;top:4px;font-size:29px;font-weight:bold;line-height:32px;color:#d08a34;text-shadow:1px 1px 0 #8a5010">P</div><svg class="ic" style="left:316px;top:1px" width="40" height="38" viewBox="0 0 40 38"><defs><linearGradient id="ieg" x1="0" y1="0" x2="0" y2="1"><stop offset="0.300" stop-color="#8fe4fc"/><stop offset="1" stop-color="#2a9cec"/></linearGradient></defs><text x="3" y="33" font-family="Liberation Sans,sans-serif" font-weight="bold" font-size="51" fill="url(#ieg)" stroke="#2480cc" stroke-width="0.700">e</text><path d="M4,33 C-3,24 10,3 26,4 C32,5 32,9 30.500,12" fill="none" stroke="#f4b818" stroke-width="2.600"/></svg><svg class="ic" style="left:383px;top:2px" width="34" height="34" viewBox="0 0 34 34"><defs><radialGradient id="egg" cx="0.400" cy="0.400" r="0.700"><stop offset="0" stop-color="#fafafa"/><stop offset="1" stop-color="#9a9aa0"/></radialGradient></defs><path d="M16,3 C6,6 1,18 3,25 C6,31 12,31 17,30Z" fill="url(#egg)"/><path d="M2.500,22 C3,30 10,32 17,30 L17,26 C12,27 6,27 2.500,22Z" fill="#3038e0"/><path d="M6,14 l4,-4 3,1 3,-2 M10,10 l1,4 M13,11 l2,5 -1,4" stroke="#222" stroke-width="0.900" fill="none"/><rect x="17" y="2" width="12" height="29" fill="#f0e010" stroke="#3a3000" stroke-width="0.600"/><rect x="20" y="2" width="3" height="29" fill="#fff870" opacity="0.700"/><path d="M17,16 L29,7 M17,27 L29,18 M23,31 L29,27" stroke="#111" stroke-width="1.400"/></svg><svg class="ic" style="left:1343px;top:9px" width="17" height="17" viewBox="0 0 17 17"><rect x="0.500" y="0.500" width="16" height="16" fill="#3a90e8" stroke="#fff"/><g fill="#fff"><ellipse cx="8.500" cy="11" rx="4" ry="3"/><circle cx="4" cy="7" r="1.500"/><circle cx="7" cy="4.500" r="1.500"/><circle cx="10.500" cy="4.500" r="1.500"/><circle cx="13" cy="7" r="1.500"/></g></svg><svg class="ic" style="left:1373px;top:11px" width="16" height="17" viewBox="0 0 16 17"><rect x="3" y="0" width="10" height="5" fill="#ddd" stroke="#555"/><rect x="1" y="4" width="14" height="12" rx="3" fill="#3a98e0" stroke="#1a5a9a"/><path d="M8,7 v6 M6,9 l2,-2 2,2" stroke="#124" fill="none"/></svg><div class="abs" style="left:1445px;top:11px;width:19px;height:17px;border-radius:9px 9px 9px 2px;background:#e83060"></div><div class="abs" style="left:1452px;top:11px;color:#fff;font:italic bold 13px Liberation Serif,serif">i</div><svg class="ic" style="left:1469px;top:11px" width="18" height="17" viewBox="0 0 18 17"><path d="M1,2 q8,-3 16,0 q0,10 -8,14 q-8,-4 -8,-14z" fill="#2878e8" stroke="#fff"/><path d="M4,7 l5,4 5,-4" stroke="#fff" stroke-width="2" fill="none"/></svg><svg class="ic" style="left:1494px;top:10px" width="13" height="20" viewBox="0 0 13 20"><ellipse cx="6.500" cy="10" rx="6" ry="9.500" fill="#0a2a6a"/><path d="M3,6 l7,7 -3.500,3.500 v-13 l3.500,3.500 -7,7" stroke="#fff" stroke-width="1.300" fill="none"/></svg><svg class="ic" style="left:1517px;top:13px" width="18" height="14" viewBox="0 0 18 14"><path d="M5,2 v10 l8,-5z" fill="#7a50c0"/><path d="M0,3 h4 M1,7 h3 M14,7 h4" stroke="#7a50c0"/></svg><svg class="ic" style="left:1541px;top:11px" width="19" height="17" viewBox="0 0 19 17"><path d="M1,6 h4 l5,-5 v15 l-5,-5 h-4z" fill="#eee" stroke="#555" stroke-width="0.800"/><path d="M12,5 q3,3.500 0,7 M14.500,3 q4,5.500 0,11" stroke="#fff" fill="none" stroke-width="1.300"/></svg><svg class="ic" style="left:1564px;top:10px" width="19" height="19" viewBox="0 0 19 19"><rect x="4" y="4" width="13" height="10" fill="#a8c0dc" stroke="#fff" stroke-width="1.500"/><path d="M7,17 h7 M10.500,14 v3" stroke="#fff" stroke-width="1.500"/><path d="M2,1 v6 M0.500,1 v3 M3.500,1 v3" stroke="#fff"/></svg><svg class="ic" style="left:1398px;top:11px" width="18" height="17" viewBox="0 0 18 17"><path d="M1,5 h4 v9 h-4z" fill="#555"/><path d="M5,7 l4,7 7,-11" fill="none" stroke="#28b848" stroke-width="2.600"/></svg><svg class="ic" style="left:1423px;top:11px" width="18" height="17" viewBox="0 0 18 17"><path d="M9,1 L1.500,16 h4 L9,8z" fill="#28a860"/><path d="M9,1 L16.500,16 h-4 L9,8z" fill="#3a80e8"/><path d="M5,12 h8" stroke="#f0b820" stroke-width="2"/></svg><div class="abs" style="left:1611px;top:4px;font-size:12px;line-height:14px;color:#fff;white-space:nowrap">19:08</div><div class="abs" style="left:1598px;top:21px;font-size:12px;line-height:14px;color:#fff;white-space:nowrap">2016/9/15</div><div class="abs" style="left:1666px;top:1px;width:14px;height:39px;border-left:1px solid #5a6a84;background:linear-gradient(90deg,#8a9cb8,#a8bcd8 50%,#7a8ca8)"></div></div>
<div class="abs" style="left:951px;top:968px;width:157px;height:27px;background:#fff;border:1px solid #d4d8e0;border-radius:3px"></div><svg class="ic" style="left:955px;top:971px" width="20" height="20" viewBox="0 0 17 17"><g fill="#2a78f0"><ellipse cx="8.500" cy="11.500" rx="4.500" ry="3.500"/><circle cx="3" cy="7.500" r="1.800"/><circle cx="6.500" cy="4" r="1.800"/><circle cx="10.500" cy="4" r="1.800"/><circle cx="14" cy="7.500" r="1.800"/></g></svg><div class="abs" style="left:982px;top:972px;font-size:15px;font-weight:bold;line-height:18px;color:#2a78f0">英</div><div class="abs" style="left:1010px;top:969px;font-size:13px;font-weight:bold;line-height:14px;color:#2a78f0">•</div><div class="abs" style="left:1017px;top:968px;font-size:19px;font-weight:bold;line-height:20px;color:#2a78f0">,</div><svg class="ic" style="left:1034px;top:973px" width="16" height="16" viewBox="0 0 16 16"><path d="M9,1 a7,7 0 1 1 -8,9 a6,6 0 0 0 8,-9z" fill="#2a78f0"/></svg><svg class="ic" style="left:1060px;top:973px" width="15" height="16" viewBox="0 0 15 16"><circle cx="7.500" cy="4.500" r="3.200" fill="none" stroke="#a8c8f8" stroke-width="1.600"/><path d="M1.500,15 q0,-6 6,-6 q6,0 6,6" fill="none" stroke="#a8c8f8" stroke-width="1.600"/></svg><svg class="ic" style="left:1086px;top:974px" width="15" height="15" viewBox="0 0 15 15"><g fill="none" stroke="#2a78f0" stroke-width="1.800"><rect x="1" y="1" width="5" height="5"/><rect x="9" y="1" width="5" height="5"/><rect x="1" y="9" width="5" height="5"/><rect x="9" y="9" width="5" height="5"/></g></svg><div class="abs" style="left:1555px;top:948px;width:90px;height:42px;border-radius:21px;background:#30343c"></div><div class="abs" style="left:1568px;top:952px;font-size:11px;line-height:14px;color:#4ab8f0">↑</div><div class="abs" style="left:1568px;top:970px;font-size:11px;line-height:14px;color:#30c080">↓</div><div class="abs" style="left:1588px;top:951px;font-size:11px;line-height:14px;color:#ddd;white-space:nowrap"><span style="color:#fff;font-size:12px">0</span>K/s</div><div class="abs" style="left:1588px;top:969px;font-size:11px;line-height:14px;color:#999;white-space:nowrap">0K/s</div><svg class="ic" style="left:1614px;top:938px" width="62" height="62" viewBox="0 0 62 62"><defs><radialGradient id="coin" cx="0.45" cy="0.400" r="0.600"><stop offset="0" stop-color="#fffbd0"/><stop offset="0.700" stop-color="#fbeea0"/><stop offset="1" stop-color="#f0d868"/></radialGradient></defs><circle cx="31" cy="31" r="30" fill="#f4dc74"/><circle cx="31" cy="31" r="26" fill="#c8aa5c"/><path d="M31,5 A26,26 0 0 1 56.500,36.500" fill="none" stroke="#68e830" stroke-width="2.600"/><circle cx="31" cy="31" r="23.600" fill="url(#coin)"/><circle cx="18" cy="17" r="4.500" fill="#f4e080" opacity="0.700"/><circle cx="43" cy="16" r="2.800" fill="#f4e080" opacity="0.700"/><circle cx="44" cy="44" r="5" fill="#f4e080" opacity="0.500"/></svg><div class="abs" style="left:1623px;top:955px;font-size:24px;font-style:italic;line-height:26px;color:#4848f0;white-space:nowrap">27<span style="font-size:11px">%</span></div><svg class="ic" style="left:1376px;top:944px;opacity:0.880" width="300" height="104" viewBox="0 0 300 104"><g transform="translate(45 52) scale(1.060) translate(-46 -50)"><path d="M46,4 L86,27 V73 L46,96 L6,73 V27Z" fill="#5a96d0" stroke="#fff" stroke-width="2"/><path d="M46,4 L86,27 V73 L60,88 L70,50Z" fill="#6cc4ec"/><path d="M6,73 L46,96 L86,73 L60,60 L30,80Z" fill="#4aa8dc"/><path d="M46,26 L68,38 V63 L46,76 L24,63 V38Z" fill="#5a96d0" stroke="#fff" stroke-width="5"/><path d="M46,51 L68,38 V63 L46,76Z" fill="#6cc4ec"/><path d="M24,38 L46,26 L68,38 L46,51Z" fill="#6a9ed8"/></g><text x="96" y="62" font-family="Liberation Sans,Noto Sans CJK SC,sans-serif" font-weight="900" font-size="48" fill="#52b4e8" stroke="#fff" stroke-width="2.400" paint-order="stroke" textLength="200" lengthAdjust="spacingAndGlyphs">3D世界网</text><text x="96" y="80.500" font-family="Liberation Sans,sans-serif" font-weight="bold" font-size="13.500" fill="#4aa4e0" stroke="#fff" stroke-width="2" paint-order="stroke" textLength="196" lengthAdjust="spacingAndGlyphs">WWW.3DSJW.COM</text></svg>
</div></body></html>
